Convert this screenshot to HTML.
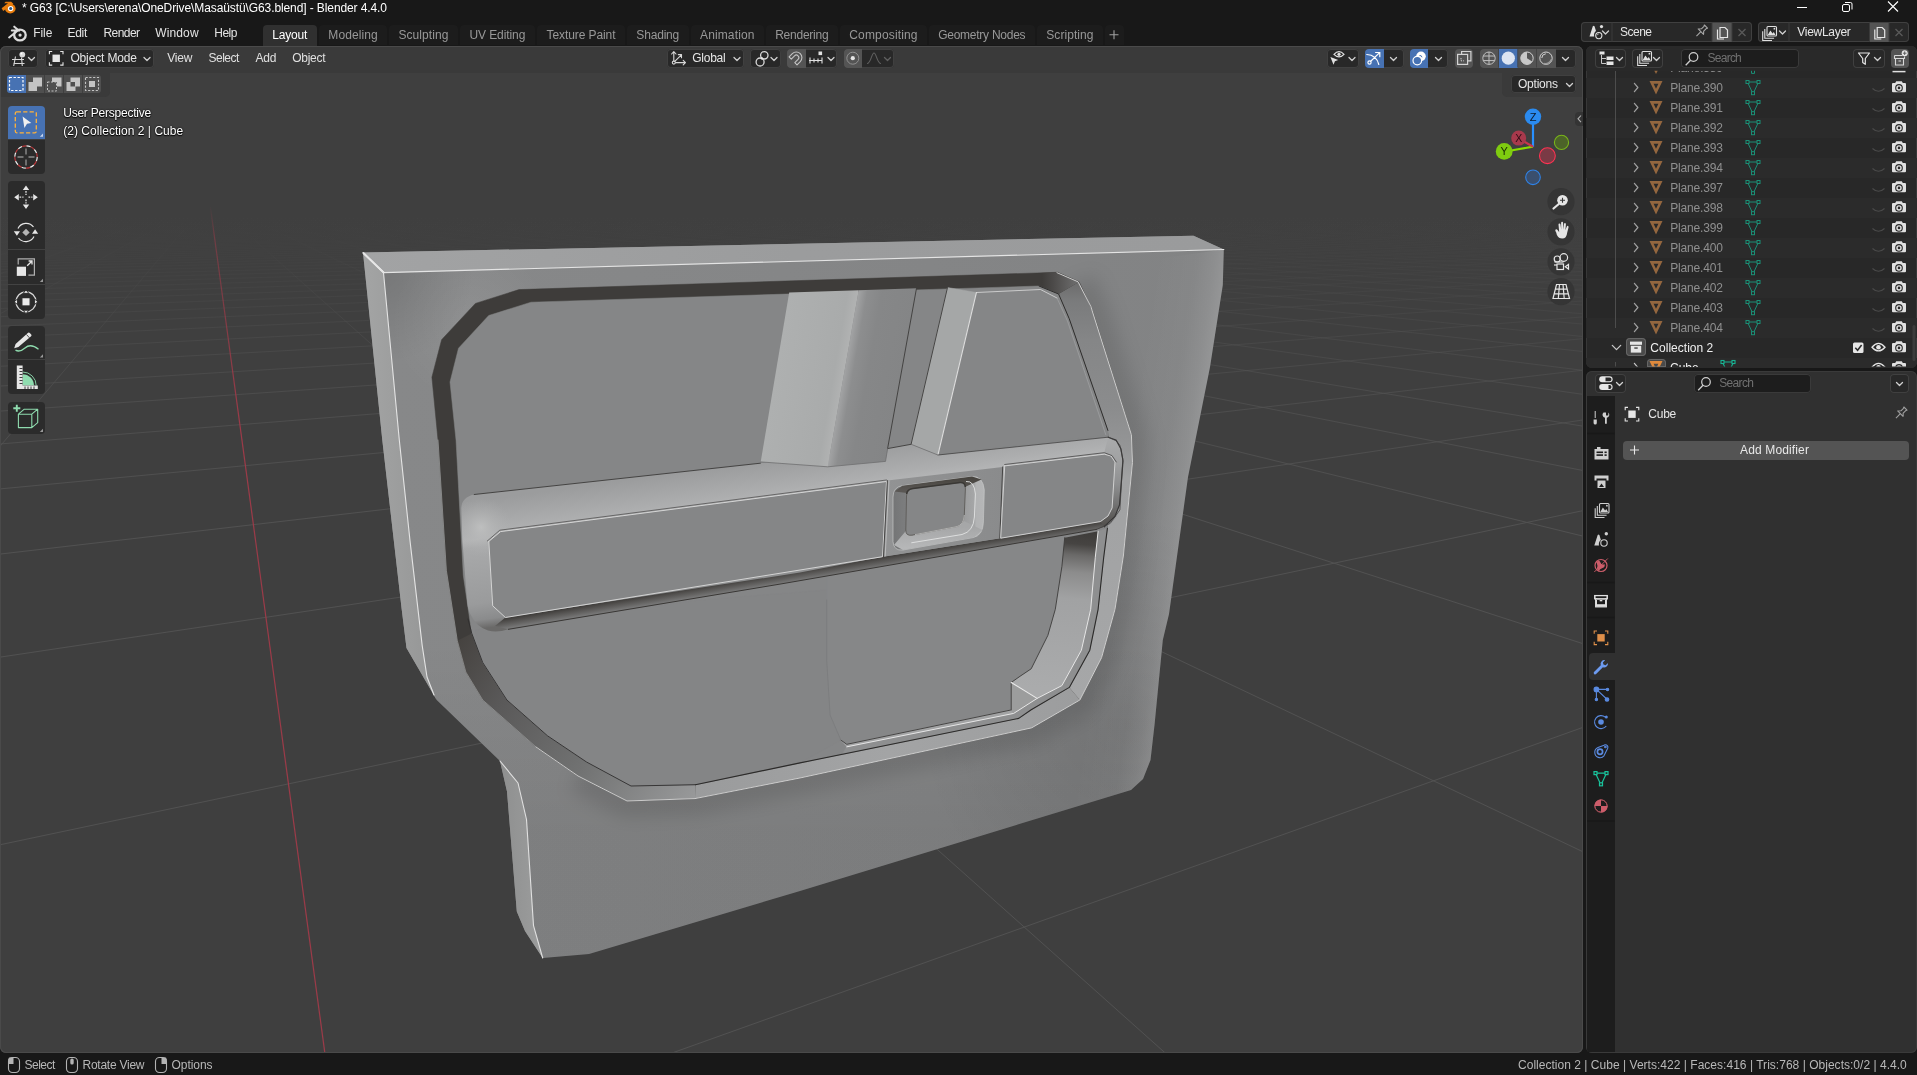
<!DOCTYPE html>
<html lang="en"><head><meta charset="utf-8"><title>Blender</title><style>
html,body{margin:0;padding:0}
body{width:1917px;height:1075px;background:#181818;position:relative;overflow:hidden;font-family:"Liberation Sans",sans-serif;font-size:12px;color:#e6e6e6}
#app{position:absolute;left:0;top:0;width:1917px;height:1075px;will-change:transform}
.b{position:absolute;box-sizing:border-box}
.t{position:absolute;white-space:pre;line-height:20px;height:20px}
svg{position:absolute;left:0;top:0;overflow:hidden}
</style></head>
<body>
<div id="app">
<span class="t" style="left:22.0px;top:-2.0px;font-size:12px;letter-spacing:-0.100px;color:#ffffff;">* G63 [C:\Users\erena\OneDrive\Masaüstü\G63.blend] - Blender 4.4.0</span>
<span class="t" style="left:33.3px;top:22.5px;font-size:12px;letter-spacing:-0.111px;color:#e4e4e4;">File</span>
<span class="t" style="left:67.4px;top:22.5px;font-size:12px;letter-spacing:-0.226px;color:#e4e4e4;">Edit</span>
<span class="t" style="left:103.4px;top:22.5px;font-size:12px;letter-spacing:-0.531px;color:#e4e4e4;">Render</span>
<span class="t" style="left:155.2px;top:22.5px;font-size:12px;letter-spacing:0.144px;color:#e4e4e4;">Window</span>
<span class="t" style="left:214.3px;top:22.5px;font-size:12px;letter-spacing:-0.559px;color:#e4e4e4;">Help</span>
<div class="b" style="left:263.0px;top:25.0px;width:54.0px;height:21.0px;background:#303030;border-radius:4px 4px 0 0;"></div>
<span class="t" style="left:272.3px;top:25.2px;font-size:12px;letter-spacing:-0.206px;color:#ffffff;">Layout</span>
<div class="b" style="left:318.8px;top:25.0px;width:68.3px;height:20.0px;background:#1c1c1c;border-radius:4px 4px 0 0;"></div>
<span class="t" style="left:328.3px;top:25.2px;font-size:12px;letter-spacing:0.086px;color:#989898;">Modeling</span>
<div class="b" style="left:388.9px;top:25.0px;width:69.1px;height:20.0px;background:#1c1c1c;border-radius:4px 4px 0 0;"></div>
<span class="t" style="left:398.4px;top:25.2px;font-size:12px;letter-spacing:0.092px;color:#989898;">Sculpting</span>
<div class="b" style="left:460.0px;top:25.0px;width:74.8px;height:20.0px;background:#1c1c1c;border-radius:4px 4px 0 0;"></div>
<span class="t" style="left:469.5px;top:25.2px;font-size:12px;letter-spacing:-0.099px;color:#989898;">UV Editing</span>
<div class="b" style="left:537.1px;top:25.0px;width:87.9px;height:20.0px;background:#1c1c1c;border-radius:4px 4px 0 0;"></div>
<span class="t" style="left:546.6px;top:25.2px;font-size:12px;letter-spacing:-0.095px;color:#989898;">Texture Paint</span>
<div class="b" style="left:626.8px;top:25.0px;width:62.0px;height:20.0px;background:#1c1c1c;border-radius:4px 4px 0 0;"></div>
<span class="t" style="left:636.3px;top:25.2px;font-size:12px;letter-spacing:-0.173px;color:#989898;">Shading</span>
<div class="b" style="left:690.5px;top:25.0px;width:73.4px;height:20.0px;background:#1c1c1c;border-radius:4px 4px 0 0;"></div>
<span class="t" style="left:700.0px;top:25.2px;font-size:12px;letter-spacing:0.130px;color:#989898;">Animation</span>
<div class="b" style="left:765.7px;top:25.0px;width:72.4px;height:20.0px;background:#1c1c1c;border-radius:4px 4px 0 0;"></div>
<span class="t" style="left:775.2px;top:25.2px;font-size:12px;letter-spacing:-0.246px;color:#989898;">Rendering</span>
<div class="b" style="left:839.8px;top:25.0px;width:87.2px;height:20.0px;background:#1c1c1c;border-radius:4px 4px 0 0;"></div>
<span class="t" style="left:849.3px;top:25.2px;font-size:12px;letter-spacing:0.150px;color:#989898;">Compositing</span>
<div class="b" style="left:928.7px;top:25.0px;width:106.4px;height:20.0px;background:#1c1c1c;border-radius:4px 4px 0 0;"></div>
<span class="t" style="left:938.2px;top:25.2px;font-size:12px;letter-spacing:-0.254px;color:#989898;">Geometry Nodes</span>
<div class="b" style="left:1036.8px;top:25.0px;width:66.1px;height:20.0px;background:#1c1c1c;border-radius:4px 4px 0 0;"></div>
<span class="t" style="left:1046.3px;top:25.2px;font-size:12px;letter-spacing:0.052px;color:#989898;">Scripting</span>
<div class="b" style="left:1104.5px;top:25.0px;width:19.5px;height:20.0px;background:#1c1c1c;border-radius:4px 4px 0 0;"></div>
<div class="b" style="left:1581.0px;top:22.0px;width:171.0px;height:20.0px;background:#282828;border-radius:4px;box-shadow:inset 0 0 0 1px #404040;"></div>
<div class="b" style="left:1712.0px;top:22.5px;width:20.0px;height:19.0px;background:#545454;"></div>
<span class="t" style="left:1620.0px;top:22.3px;font-size:12px;letter-spacing:-0.506px;color:#e6e6e6;">Scene</span>
<div class="b" style="left:1758.0px;top:22.0px;width:151.0px;height:20.0px;background:#282828;border-radius:4px;box-shadow:inset 0 0 0 1px #404040;"></div>
<div class="b" style="left:1869.5px;top:22.5px;width:19.5px;height:19.0px;background:#545454;"></div>
<span class="t" style="left:1797.3px;top:22.3px;font-size:12px;letter-spacing:-0.289px;color:#e6e6e6;">ViewLayer</span>
<div class="b" id="vp" style="left:0;top:46px;width:1583px;height:1007px;background:#3f3f3f;border-radius:6px;overflow:hidden;box-shadow:inset 0 0 0 1px #474747"><svg width="1583" height="1007" viewBox="0 46 1583 1007">
<defs>
<linearGradient id="gf" gradientUnits="userSpaceOnUse" x1="0" y1="215" x2="0" y2="520"><stop offset="0" stop-color="#525252" stop-opacity="0"/><stop offset="0.1" stop-color="#525252" stop-opacity="0.06"/><stop offset="0.3" stop-color="#525252" stop-opacity="0.3"/><stop offset="0.6" stop-color="#525252" stop-opacity="0.7"/><stop offset="1" stop-color="#525252" stop-opacity="0.95"/></linearGradient>
<linearGradient id="gr" gradientUnits="userSpaceOnUse" x1="0" y1="205" x2="0" y2="420"><stop offset="0" stop-color="#9c3a48" stop-opacity="0"/><stop offset="0.15" stop-color="#9c3a48" stop-opacity="0.5"/><stop offset="1" stop-color="#9c3a48" stop-opacity="1"/></linearGradient>
<linearGradient id="m1" gradientUnits="userSpaceOnUse" x1="383.0" y1="0.0" x2="1224.0" y2="0.0"><stop offset="0" stop-color="#878889"/><stop offset="0.3" stop-color="#868788"/><stop offset="0.65" stop-color="#848586"/><stop offset="1" stop-color="#828384"/></linearGradient>
<linearGradient id="skd" gradientUnits="userSpaceOnUse" x1="0" y1="640" x2="0" y2="830"><stop offset="0" stop-color="#000" stop-opacity="0"/><stop offset="1" stop-color="#000" stop-opacity="0.065"/></linearGradient>
<radialGradient id="skr" gradientUnits="userSpaceOnUse" cx="1128" cy="725" r="210"><stop offset="0" stop-color="#000" stop-opacity="0.1"/><stop offset="0.5" stop-color="#000" stop-opacity="0.05"/><stop offset="1" stop-color="#000" stop-opacity="0"/></radialGradient>
<radialGradient id="tld" gradientUnits="userSpaceOnUse" cx="384" cy="273" r="90"><stop offset="0" stop-color="#000" stop-opacity="0.12"/><stop offset="1" stop-color="#000" stop-opacity="0"/></radialGradient>
<radialGradient id="tll" gradientUnits="userSpaceOnUse" cx="470" cy="322" r="80"><stop offset="0" stop-color="#fff" stop-opacity="0.07"/><stop offset="1" stop-color="#fff" stop-opacity="0"/></radialGradient>
<linearGradient id="m2" gradientUnits="userSpaceOnUse" x1="363.0" y1="0.0" x2="1224.0" y2="0.0"><stop offset="0" stop-color="#a2a3a4"/><stop offset="0.5" stop-color="#9b9c9d"/><stop offset="1" stop-color="#9a9b9c"/></linearGradient>
<linearGradient id="m3" gradientUnits="userSpaceOnUse" x1="360.0" y1="0.0" x2="430.0" y2="0.0"><stop offset="0" stop-color="#a4a5a5"/><stop offset="1" stop-color="#969797"/></linearGradient>
<linearGradient id="m4" gradientUnits="userSpaceOnUse" x1="500.0" y1="0.0" x2="545.0" y2="0.0"><stop offset="0" stop-color="#8e8f8f"/><stop offset="1" stop-color="#9d9e9e"/></linearGradient>
<linearGradient id="rlite" gradientUnits="userSpaceOnUse" x1="1118" y1="420" x2="1200" y2="432.6"><stop offset="0.15" stop-color="#fff" stop-opacity="0"/><stop offset="0.65" stop-color="#fff" stop-opacity="0.03"/><stop offset="0.86" stop-color="#fff" stop-opacity="0.09"/><stop offset="1" stop-color="#fff" stop-opacity="0.15"/></linearGradient>
<clipPath id="rpclip"><polygon points="363.0,252.6 1193.5,235.7 1223.8,249.5 1222.8,285.0 1210.0,367.0 1188.0,477.0 1169.0,614.0 1162.8,640.0 1154.6,724.0 1150.5,760.0 1143.0,779.0 1131.0,790.0 800.0,891.0 589.0,954.0 542.7,958.0 525.0,931.0 516.8,911.6 507.0,791.6 500.0,761.0 436.7,700.0 406.5,648.0 401.7,609.3 382.3,440.0"/></clipPath><filter id="blur9" filterUnits="userSpaceOnUse" x="300" y="200" width="1000" height="800"><feGaussianBlur stdDeviation="9"/></filter>
<linearGradient id="m5" gradientUnits="userSpaceOnUse" x1="455.0" y1="640.0" x2="700.0" y2="800.0"><stop offset="0" stop-color="#45423f"/><stop offset="0.25" stop-color="#5a5959"/><stop offset="0.6" stop-color="#717272"/><stop offset="1" stop-color="#9a9b9c"/></linearGradient>
<linearGradient id="m6" gradientUnits="userSpaceOnUse" x1="695.0" y1="0.0" x2="1080.0" y2="0.0"><stop offset="0" stop-color="#9a9b9c"/><stop offset="0.5" stop-color="#a3a4a5"/><stop offset="1" stop-color="#9c9d9e"/></linearGradient>
<linearGradient id="m7" gradientUnits="userSpaceOnUse" x1="0.0" y1="282.0" x2="0.0" y2="700.0"><stop offset="0" stop-color="#6c6c6c"/><stop offset="0.045" stop-color="#7a7b7c"/><stop offset="0.14" stop-color="#858687"/><stop offset="0.3" stop-color="#8b8c8d"/><stop offset="0.4" stop-color="#959697"/><stop offset="0.47" stop-color="#a1a2a3"/><stop offset="1" stop-color="#a6a7a8"/></linearGradient>
<linearGradient id="m8" gradientUnits="userSpaceOnUse" x1="1042.0" y1="0.0" x2="1076.0" y2="0.0"><stop offset="0" stop-color="#3e3c3a"/><stop offset="0.35" stop-color="#4d4b4a"/><stop offset="1" stop-color="#6c6c6c"/></linearGradient>
<linearGradient id="m9" gradientUnits="userSpaceOnUse" x1="1078.0" y1="533.0" x2="1064.0" y2="690.0"><stop offset="0" stop-color="#3f3d3b"/><stop offset="0.07" stop-color="#464442"/><stop offset="0.14" stop-color="#6a6968"/><stop offset="0.25" stop-color="#8c8c8c"/><stop offset="0.42" stop-color="#a1a2a3"/><stop offset="1" stop-color="#aaabac"/></linearGradient>
<linearGradient id="m10" gradientUnits="userSpaceOnUse" x1="700.0" y1="469.8" x2="717.6" y2="595.8"><stop offset="0" stop-color="#9b9c9d"/><stop offset="0.12" stop-color="#a4a5a6"/><stop offset="0.24" stop-color="#adaeaf"/><stop offset="0.3" stop-color="#b3b4b5"/><stop offset="0.36" stop-color="#a8a9aa"/><stop offset="0.8" stop-color="#9a9b9c"/><stop offset="0.93" stop-color="#8a8b8c"/><stop offset="1" stop-color="#6a6968"/></linearGradient>
<radialGradient id="armhl" gradientUnits="userSpaceOnUse" cx="481" cy="527" r="30"><stop offset="0" stop-color="#c4c5c5" stop-opacity="0.75"/><stop offset="0.45" stop-color="#b8b9b9" stop-opacity="0.45"/><stop offset="1" stop-color="#b0b1b2" stop-opacity="0"/></radialGradient>
<clipPath id="armclip"><path d="M474.2 494.5 L560 485 L560 622 L508.4 629.3 Q497 633 488 630.5 Q477 627 472 617 Q468 611 467.3 603 L462.3 539.4 L461.3 508 Q461.5 497.5 474.2 494.5Z"/></clipPath>
<linearGradient id="m11" gradientUnits="userSpaceOnUse" x1="461.0" y1="0.0" x2="500.0" y2="0.0"><stop offset="0" stop-color="#a9aaab"/><stop offset="0.5" stop-color="#b1b2b3"/><stop offset="1" stop-color="#b1b2b3"/></linearGradient>
<linearGradient id="m12" gradientUnits="userSpaceOnUse" x1="775.0" y1="380.0" x2="845.0" y2="392.0"><stop offset="0" stop-color="#aeb0b0"/><stop offset="0.8" stop-color="#a9abab"/><stop offset="1" stop-color="#b4b5b5"/></linearGradient>
<linearGradient id="m13" gradientUnits="userSpaceOnUse" x1="843.0" y1="380.0" x2="900.0" y2="390.0"><stop offset="0" stop-color="#a2a3a4"/><stop offset="0.15" stop-color="#8d8e8f"/><stop offset="0.4" stop-color="#868788"/><stop offset="1" stop-color="#848586"/></linearGradient>
<linearGradient id="m14" gradientUnits="userSpaceOnUse" x1="0.0" y1="440.0" x2="0.0" y2="528.0"><stop offset="0" stop-color="#a9aaab"/><stop offset="0.25" stop-color="#a0a1a2"/><stop offset="0.5" stop-color="#8e8f90"/><stop offset="0.72" stop-color="#747474"/><stop offset="0.9" stop-color="#5a5856"/><stop offset="1" stop-color="#504e4b"/></linearGradient>
<linearGradient id="m15" gradientUnits="userSpaceOnUse" x1="700.0" y1="586.0" x2="701.7" y2="596.4"><stop offset="0" stop-color="#3b3937"/><stop offset="0.3" stop-color="#4e4c4a"/><stop offset="0.7" stop-color="#656463"/><stop offset="1" stop-color="#777777"/></linearGradient>
<linearGradient id="m16" gradientUnits="userSpaceOnUse" x1="885.0" y1="0.0" x2="1003.0" y2="0.0"><stop offset="0" stop-color="#929394"/><stop offset="0.5" stop-color="#8e8f90"/><stop offset="1" stop-color="#8a8b8c"/></linearGradient>
<linearGradient id="m17" gradientUnits="userSpaceOnUse" x1="893.0" y1="0.0" x2="985.0" y2="0.0"><stop offset="0" stop-color="#747576"/><stop offset="0.13" stop-color="#7c7d7e"/><stop offset="0.16" stop-color="#858687"/><stop offset="0.78" stop-color="#9c9d9e"/><stop offset="0.89" stop-color="#a6a7a8"/><stop offset="0.9" stop-color="#b2b3b4"/><stop offset="1" stop-color="#b6b7b8"/></linearGradient>
<linearGradient id="m18" gradientUnits="userSpaceOnUse" x1="0.0" y1="478.0" x2="0.0" y2="490.0"><stop offset="0" stop-color="#47443f"/><stop offset="1" stop-color="#5a5754"/></linearGradient>
<linearGradient id="m19" gradientUnits="userSpaceOnUse" x1="0.0" y1="527.0" x2="0.0" y2="548.0"><stop offset="0" stop-color="#a6a7a8"/><stop offset="1" stop-color="#b6b7b8"/></linearGradient>
</defs>
<path d="M-2983.4 286.8L-90.2 207.7M-2991.6 289.4L-81.5 207.7M-2980.6 291.5L-72.8 207.6M-2989.2 294.4L-64.2 207.6M-2998.4 297.4L-55.6 207.6M-2986.5 299.9L-47.1 207.6M-2996.2 303.4L-38.6 207.5M-2983.4 306.2L-30.1 207.5M-2993.6 310.1L-21.8 207.5M-2980.0 313.4L-13.4 207.5M-2990.7 317.8L-5.1 207.4M-2976.0 321.6L3.1 207.4M-2987.4 326.7L11.4 207.4M-2999.8 332.3L19.5 207.4M-2983.5 337.1L27.6 207.3M-2996.9 343.6L35.7 207.3M-2979.0 349.3L43.8 207.3M-2993.3 357.1L51.8 207.3M-2973.5 364.0L59.7 207.2M-2989.0 373.4L67.6 207.2M-2966.8 381.8L75.5 207.2M-2983.7 393.5L83.3 207.2M-2958.5 404.0L91.1 207.1M-2977.0 419.0L98.8 207.1M-2998.5 436.3L106.5 207.1M-2968.2 452.2L114.2 207.1M-2992.5 475.4L121.8 207.0M-2956.4 497.3L129.4 207.0M-2984.1 530.2L137.0 207.0M-2939.3 562.1L144.5 207.0M-2971.6 612.2L152.0 207.0M-2912.6 663.4L159.4 206.9M-2950.7 748.8L166.8 206.9M-2865.1 843.6L174.1 206.9M-2909.0 1021.5L181.5 206.9M-2986.5 1335.6L188.7 206.8M-2784.7 1834.5L196.0 206.8M-1855.1 2632.7L203.2 206.8M2884.5 2588.0L217.5 206.8M4499.6 2236.9L224.6 206.7M4628.9 1628.7L231.7 206.7M4698.9 1299.8L238.7 206.7M4742.7 1093.9L245.7 206.7M4772.7 952.7L252.7 206.6M4794.6 850.0L259.6 206.6M4999.0 795.2L266.5 206.6M4991.7 728.9L273.4 206.6M4985.9 675.9L280.2 206.6M4981.1 632.4L287.0 206.5M4977.2 596.2L293.7 206.5M4973.8 565.6L300.5 206.5M4970.9 539.3L307.2 206.5M4968.4 516.6L313.8 206.5M4966.2 496.6L320.4 206.4M4964.3 479.0L327.0 206.4M4962.6 463.4L333.6 206.4M4961.1 449.4L340.1 206.4M4959.7 436.8L346.6 206.4M4958.4 425.4L353.1 206.3M4957.3 415.0L359.6 206.3M4956.3 405.6L366.0 206.3M4955.3 396.9L372.4 206.3M4954.4 388.9L378.7 206.3M4953.6 381.5L385.0 206.2M4952.9 374.7L391.3 206.2M4952.2 368.4L397.6 206.2M4951.5 362.5L403.8 206.2M4950.9 357.0L410.0 206.2M4950.4 351.8L416.2 206.1M4998.8 348.5L422.3 206.1M4996.8 343.9L428.5 206.1M4994.9 339.5L434.5 206.1M4993.2 335.4L440.6 206.1M4991.5 331.5L446.6 206.1M4989.9 327.9L452.6 206.0M4988.4 324.4L458.6 206.0M4987.0 321.1L464.6 206.0M4985.6 318.0L470.5 206.0M4984.4 315.0L476.4 206.0M4983.1 312.2L482.3 205.9M4982.0 309.5L488.1 205.9M4980.9 306.9L493.9 205.9M4979.8 304.5L499.7 205.9M4978.8 302.1L505.5 205.9M4977.8 299.9L511.2 205.9M4976.9 297.7L516.9 205.8M4976.0 295.7L522.6 205.8M4975.1 293.7L528.3 205.8M4974.3 291.8L533.9 205.8M4973.5 289.9L539.5 205.8M4972.8 288.2L545.1 205.8M4972.0 286.5L550.7 205.7M4971.3 284.8L556.2 205.7M4998.8 283.8L561.7 205.7M4997.6 282.2L567.2 205.7M4996.5 280.7L572.7 205.7M4995.4 279.3L578.1 205.7M4994.4 277.9L583.6 205.6M4993.4 276.6L589.0 205.6M4992.4 275.3L594.3 205.6M4991.5 274.0L599.7 205.6M4990.5 272.8L605.0 205.6M4989.7 271.6L610.3 205.6M4988.8 270.5L615.6 205.5M4988.0 269.4L620.8 205.5M4987.2 268.3L626.1 205.5M4986.4 267.3L631.3 205.5M4985.6 266.3L636.5 205.5M4984.9 265.3L641.6 205.5M4984.1 264.3L646.8 205.4M4983.4 263.4L651.9 205.4M4982.8 262.5L657.0 205.4M4982.1 261.6L662.1 205.4M4981.5 260.8L667.1 205.4M4980.8 259.9L672.2 205.4M4980.2 259.1L677.2 205.3M4999.6 258.6L682.2 205.3M4998.8 257.8L687.2 205.3M4998.0 257.0L692.1 205.3M4997.2 256.3L697.1 205.3M4996.4 255.6L702.0 205.3M4995.6 254.9L706.9 205.3M4994.9 254.2L711.7 205.2M4994.2 253.5L716.6 205.2M4993.5 252.9L721.4 205.2M4992.8 252.2L726.2 205.2M4992.1 251.6L731.0 205.2M4991.5 251.0L735.8 205.2M4990.8 250.4L740.5 205.2M4990.2 249.8L745.3 205.1M4989.6 249.2L750.0 205.1M4989.0 248.7L754.7 205.1M4988.4 248.1L759.4 205.1M4987.8 247.6L764.0 205.1M4987.2 247.1L768.7 205.1M4986.7 246.5L773.3 205.1M4986.1 246.0L777.9 205.0M4985.6 245.5L782.5 205.0M4985.1 245.1L787.0 205.0M4984.6 244.6L791.6 205.0M4999.4 244.3L796.1 205.0M4998.8 243.8L800.6 205.0M4998.2 243.4L805.1 205.0M4997.5 242.9L809.6 204.9M4996.9 242.5L814.0 204.9M4996.3 242.1L818.5 204.9M4995.8 241.6L822.9 204.9M4995.2 241.2L827.3 204.9M4994.6 240.8L831.7 204.9M4994.1 240.4L836.1 204.9M4993.5 240.0L840.4 204.8M4993.0 239.7L844.8 204.8M4992.5 239.3L849.1 204.8M4992.0 238.9L853.4 204.8M4991.4 238.6L857.7 204.8M4990.9 238.2L861.9 204.8M4990.5 237.9L866.2 204.8M4990.0 237.5L870.4 204.8M4989.5 237.2L874.6 204.7M4999.4 415.0L3197.2 213.0M4981.5 473.6L3166.9 212.9M4975.4 580.3L3137.2 212.7M4961.6 821.2L3108.1 212.6M4900.9 1877.3L3079.5 212.5M822.6 2823.6L3051.5 212.3M-2806.8 2296.6L3024.1 212.2M-2765.2 1428.5L2997.2 212.1M-2927.3 1095.8L2970.8 212.0M-2876.1 888.3L2944.9 211.9M-2960.0 769.9L2919.5 211.8M-2919.2 678.3L2894.5 211.6M-2975.3 618.0L2870.0 211.5M-2942.1 566.6L2845.9 211.4M-2984.1 530.2L2822.3 211.3M-2956.4 497.3L2799.1 211.2M-2989.9 472.9L2776.3 211.1M-2966.0 450.0L2753.9 211.0M-2993.9 432.6L2731.9 210.9M-2973.1 415.8L2710.3 210.8M-2996.9 402.7L2689.0 210.7M-2978.4 389.9L2668.1 210.6M-2999.2 379.7L2647.5 210.5M-2982.6 369.5L2627.3 210.4M-2967.7 360.4L2607.4 210.3M-2985.9 353.1L2587.8 210.3M-2972.3 345.7L2568.6 210.2M-2988.7 339.6L2549.7 210.1M-2976.1 333.4L2531.0 210.0M-2991.0 328.3L2512.7 209.9M-2979.3 323.1L2494.6 209.8M-2993.0 318.8L2476.9 209.7M-2982.1 314.3L2459.4 209.7M-2994.7 310.5L2442.1 209.6M-2984.4 306.6L2425.2 209.5M-2996.2 303.4L2408.5 209.4M-2986.5 299.9L2392.0 209.4M-2997.4 297.1L2375.8 209.3M-2988.3 294.1L2359.8 209.2M-2998.6 291.5L2344.1 209.1M-2989.9 288.8L2328.5 209.1M-2999.6 286.6L2313.2 209.0M-2991.4 284.2L2298.2 208.9M-2983.6 281.9L2283.3 208.9M-2992.7 280.0L2268.7 208.8M-2985.3 277.9L2254.2 208.7M-2993.9 276.2L2240.0 208.7M-2986.8 274.3L2225.9 208.6M-2994.9 272.8L2212.1 208.6M-2988.1 271.1L2198.4 208.5M-2995.9 269.6L2185.0 208.4M-2989.4 268.1L2171.7 208.4M-2996.8 266.7L2158.5 208.3M-2990.5 265.3L2145.6 208.3M-2997.6 264.1L2132.8 208.2M-2991.6 262.8L2120.2 208.1M-2998.4 261.6L2107.8 208.1M-2992.5 260.4L2095.5 208.0M-2999.1 259.4L2083.4 208.0M-2993.4 258.3L2071.4 207.9M-2976.3 257.1L2059.6 207.9M-2859.2 255.0L2047.9 207.8M-2750.4 253.0L2036.4 207.8M-2649.0 251.2L2025.0 207.7M-2554.4 249.4L2013.8 207.7M-2465.8 247.8L2002.7 207.6M-2382.7 246.3L1991.7 207.6M-2304.6 244.9L1980.9 207.5M-2231.1 243.6L1970.2 207.5M-2161.8 242.3L1959.6 207.4M-2096.3 241.2L1949.2 207.4M-2034.3 240.0L1938.9 207.3M-1975.5 239.0L1928.7 207.3M-1919.8 238.0L1918.6 207.2M-1866.8 237.0L1908.6 207.2M-1816.4 236.1L1898.8 207.1M-1768.4 235.2L1889.0 207.1M-1722.6 234.4L1879.4 207.0M-1678.9 233.6L1869.9 207.0M-1637.2 232.9L1860.5 207.0M-1597.2 232.1L1851.2 206.9M-1558.9 231.5L1842.0 206.9M-1522.2 230.8L1832.9 206.8M-1487.0 230.2L1823.9 206.8M-1453.2 229.5L1815.0 206.8M-1420.8 229.0L1806.3 206.7M-1389.5 228.4L1797.6 206.7M-1359.5 227.9L1789.0 206.6M-1330.5 227.3L1780.4 206.6M-1302.6 226.8L1772.0 206.6M-1275.7 226.3L1763.7 206.5M-1249.8 225.9L1755.4 206.5M-1224.7 225.4L1747.3 206.5M-1200.5 225.0L1739.2 206.4M-1177.0 224.6L1731.2 206.4M-1154.4 224.1L1723.3 206.3M-1132.5 223.7L1715.5 206.3M-1111.2 223.4L1707.8 206.3M-1090.7 223.0L1700.1 206.2M-1070.7 222.6L1692.5 206.2M-1051.4 222.3L1685.0 206.2M-1032.6 221.9L1677.6 206.1M-1014.4 221.6L1670.2 206.1M-996.7 221.3L1663.0 206.1M-979.5 221.0L1655.7 206.0M-962.8 220.7L1648.6 206.0M-946.6 220.4L1641.5 206.0M-930.8 220.1L1634.5 205.9M-915.4 219.8L1627.6 205.9M-900.5 219.6L1620.7 205.9M-885.9 219.3L1613.9 205.9M-871.7 219.0L1607.2 205.8M-857.9 218.8L1600.5 205.8M-844.4 218.5L1593.9 205.8M-831.3 218.3L1587.4 205.7M-818.5 218.1L1580.9 205.7M-806.0 217.8L1574.5 205.7M-793.8 217.6L1568.1 205.6M-781.9 217.4L1561.8 205.6M-770.2 217.2L1555.6 205.6M-758.9 217.0L1549.4 205.6M-747.8 216.8L1543.3 205.5M-736.9 216.6L1537.2 205.5M-726.3 216.4L1531.2 205.5M-715.9 216.2L1525.2 205.4M-705.8 216.0L1519.3 205.4M-695.8 215.9L1513.4 205.4M-686.1 215.7L1507.6 205.4M-676.6 215.5L1501.9 205.3M-667.3 215.3L1496.2 205.3M-658.2 215.2L1490.5 205.3M-649.3 215.0L1484.9 205.3M-640.5 214.9L1479.3 205.2M-632.0 214.7L1473.8 205.2M-623.6 214.6L1468.4 205.2M-615.3 214.4L1463.0 205.2M-607.3 214.3L1457.6 205.1M-599.4 214.1L1452.3 205.1M-591.6 214.0L1447.0 205.1M-584.0 213.8L1441.8 205.1M-576.5 213.7L1436.6 205.0M-569.2 213.6L1431.4 205.0M-562.0 213.4L1426.3 205.0M-554.9 213.3L1421.3 205.0M-548.0 213.2L1416.3 205.0M-541.2 213.1L1411.3 204.9M-534.5 212.9L1406.4 204.9M-527.9 212.8L1401.5 204.9M-521.5 212.7L1396.6 204.9M-515.1 212.6L1391.8 204.8M-508.9 212.5L1387.0 204.8M-502.7 212.4L1382.3 204.8M-496.7 212.3L1377.6 204.8M-490.8 212.2L1372.9 204.8M-485.0 212.0L1368.3 204.7M-479.2 211.9L1363.7 204.7M-473.6 211.8L1359.2 204.7M-468.1 211.7L1354.6 204.7M-462.6 211.6L1350.2 204.7M-457.2 211.5L1345.7 204.6M-452.0 211.5L1341.3 204.6M-446.8 211.4L1336.9 204.6M-441.6 211.3L1332.6 204.6M-436.6 211.2L1328.3 204.6M-431.6 211.1L1324.0 204.5M-426.8 211.0L1319.7 204.5" stroke="url(#gf)" stroke-width="1" fill="none"/>
<path d="M535.5 2610.2L210.4 206.8" stroke="url(#gr)" stroke-width="1.2" fill="none"/>
<polygon points="363.0,252.6 1193.5,235.7 1223.8,249.5 1222.8,285.0 1210.0,367.0 1188.0,477.0 1169.0,614.0 1162.8,640.0 1154.6,724.0 1150.5,760.0 1143.0,779.0 1131.0,790.0 800.0,891.0 589.0,954.0 542.7,958.0 525.0,931.0 516.8,911.6 507.0,791.6 500.0,761.0 436.7,700.0 406.5,648.0 401.7,609.3 382.3,440.0" fill="url(#m1)"/>
<polygon points="363.0,252.6 1193.5,235.7 1223.8,249.5 1222.8,285.0 1210.0,367.0 1188.0,477.0 1169.0,614.0 1162.8,640.0 1154.6,724.0 1150.5,760.0 1143.0,779.0 1131.0,790.0 800.0,891.0 589.0,954.0 542.7,958.0 525.0,931.0 516.8,911.6 507.0,791.6 500.0,761.0 436.7,700.0 406.5,648.0 401.7,609.3 382.3,440.0" fill="url(#skd)"/>
<polygon points="363.0,252.6 1193.5,235.7 1223.8,249.5 1222.8,285.0 1210.0,367.0 1188.0,477.0 1169.0,614.0 1162.8,640.0 1154.6,724.0 1150.5,760.0 1143.0,779.0 1131.0,790.0 800.0,891.0 589.0,954.0 542.7,958.0 525.0,931.0 516.8,911.6 507.0,791.6 500.0,761.0 436.7,700.0 406.5,648.0 401.7,609.3 382.3,440.0" fill="url(#skr)"/>
<polygon points="363.0,252.6 1193.5,235.7 1223.8,249.5 1222.8,285.0 1210.0,367.0 1188.0,477.0 1169.0,614.0 1162.8,640.0 1154.6,724.0 1150.5,760.0 1143.0,779.0 1131.0,790.0 800.0,891.0 589.0,954.0 542.7,958.0 525.0,931.0 516.8,911.6 507.0,791.6 500.0,761.0 436.7,700.0 406.5,648.0 401.7,609.3 382.3,440.0" fill="url(#tld)"/>
<polygon points="363.0,252.6 1193.5,235.7 1223.8,249.5 1222.8,285.0 1210.0,367.0 1188.0,477.0 1169.0,614.0 1162.8,640.0 1154.6,724.0 1150.5,760.0 1143.0,779.0 1131.0,790.0 800.0,891.0 589.0,954.0 542.7,958.0 525.0,931.0 516.8,911.6 507.0,791.6 500.0,761.0 436.7,700.0 406.5,648.0 401.7,609.3 382.3,440.0" fill="url(#tll)"/>
<polygon points="363.0,252.6 1193.5,235.7 1223.8,249.5 383.5,272.7" fill="url(#m2)"/>
<polygon points="363.0,252.6 383.5,272.7 399.3,440.0 410.1,541.6 422.2,645.6 427.0,677.0 436.7,700.0 406.5,648.0 401.7,609.3 382.3,440.0" fill="url(#m3)"/>
<polygon points="500.0,761.0 518.0,783.0 526.5,819.5 533.5,925.6 542.7,958.0 525.0,931.0 516.8,911.6 507.0,791.6" fill="url(#m4)"/>
<polygon points="1060.0,272.6 1223.8,249.5 1222.8,285.0 1210.0,367.0 1188.0,477.0 1169.0,614.0 1162.8,640.0 1154.6,724.0 1150.5,760.0 1143.0,779.0 1131.0,790.0 1040.0,818.0 1031.6,727.9 1079.9,700.0 1101.6,657.7 1115.0,609.3 1123.4,556.0 1132.5,462.5 1131.4,434.7 1090.8,306.4 1078.0,281.8" fill="url(#rlite)"/>
<g clip-path="url(#rpclip)"><polyline points="1079.2,281.8 1093.2,313.0 1131.4,434.7 1132.5,462.5 1123.4,556.0 1115.0,609.3 1101.6,657.7 1079.9,700.0 1031.6,727.9 800.0,778.0 695.0,798.6 627.0,801.0 578.0,776.0" fill="none" stroke="#000" stroke-opacity="0.115" stroke-width="34" stroke-linejoin="round" filter="url(#blur9)"/></g>
<polygon points="431.9,377.2 441.6,339.7 475.4,303.4 519.0,289.6 1057.5,272.3 1079.2,281.8 1093.2,313.0 1131.4,434.7 1132.5,462.5 1123.4,556.0 1115.0,609.3 1101.6,657.7 1079.9,700.0 1031.6,727.9 800.0,778.0 695.0,798.6 627.0,801.0 578.0,776.0 536.0,747.0 482.7,700.0 465.8,672.0 457.3,640.7 446.4,570.6 438.0,440.0" fill="#3e3c3a" stroke="#3e3c3a" stroke-width="0.5"/>
<polygon points="457.3,640.7 465.8,672.0 482.7,700.0 536.0,747.0 578.0,776.0 627.0,801.0 695.0,798.6 695.4,784.7 631.0,786.0 586.5,762.0 547.5,735.8 506.9,700.0 482.7,662.5 471.8,633.5" fill="url(#m5)"/>
<polygon points="695.0,798.6 800.0,778.0 1031.6,727.9 1079.9,700.0 1069.3,687.4 1031.2,709.8 1018.7,718.4 800.0,762.9 695.4,784.7" fill="url(#m6)"/>
<polygon points="1079.2,281.8 1093.2,313.0 1131.4,434.7 1132.5,462.5 1123.4,556.0 1115.0,609.3 1101.6,657.7 1079.9,700.0 1069.3,687.4 1089.8,650.2 1098.1,609.3 1103.7,557.2 1107.4,528.4 1110.0,462.0 1107.9,430.4 1069.2,318.6 1058.6,294.0" fill="url(#m7)"/>
<polygon points="1040.0,273.0 1057.5,272.3 1079.2,281.8 1058.6,294.0 1039.0,286.0" fill="url(#m8)"/>
<polygon points="450.0,382.0 458.5,348.2 488.7,315.5 531.0,302.2 1039.0,286.0 1058.6,294.0 1069.2,318.6 1107.9,430.4 1110.0,462.0 1107.4,528.4 1103.7,557.2 1098.1,609.3 1089.8,650.2 1069.3,687.4 1031.2,709.8 1018.7,718.4 800.0,762.9 695.4,784.7 631.0,786.0 586.5,762.0 547.5,735.8 506.9,700.0 482.7,662.5 471.8,633.5 463.3,575.4 456.0,440.0" fill="#858687" stroke="#858687" stroke-width="0.5"/>
<polygon points="826.5,590.0 832.0,721.0 840.5,740.5 800.0,762.8 695.4,784.7 631.0,786.0 586.5,762.0 547.5,735.8 506.9,700.0 482.7,662.5 475.0,630.0 700.0,600.0" fill="#848586" stroke="#848586" stroke-width="0.5"/>
<polygon points="826.7,575.0 1064.7,535.0 1064.7,537.7 1061.9,566.5 1055.3,609.3 1047.9,635.3 1031.2,668.8 1020.0,676.3 1011.2,682.5 1011.2,710.0 1010.4,710.1 846.8,744.3 840.9,740.1 830.1,715.1 826.7,660.0" fill="#868788" stroke="#868788" stroke-width="0.5"/>
<polygon points="1098.1,531.2 1095.3,557.2 1090.7,609.3 1081.4,650.2 1061.9,685.6 1037.1,698.4 1013.7,713.4 846.8,746.8 842.0,754.4 1018.7,718.4 1031.2,709.8 1069.3,687.4 1089.8,650.2 1098.1,609.3 1103.7,557.2 1107.4,528.4" fill="#8e8f90" stroke="#8e8f90" stroke-width="0.5"/>
<polygon points="840.9,740.1 846.8,744.3 1010.4,710.1 1011.2,710.0 1013.7,713.4 846.8,746.8" fill="#a2a3a4" stroke="#a2a3a4" stroke-width="0.5"/>
<polygon points="1064.7,537.7 1061.9,566.5 1055.3,609.3 1047.9,635.3 1031.2,668.8 1020.0,676.3 1011.2,682.5 1037.1,698.4 1061.9,685.6 1081.4,650.2 1090.7,609.3 1095.3,557.2 1098.1,531.2" fill="url(#m9)"/>
<polygon points="1011.2,682.5 1037.1,698.4 1013.7,713.4 1011.2,710.0" fill="#9c9d9d" stroke="#9c9d9d" stroke-width="0.5"/>
<polyline points="1064.7,537.7 1061.9,566.5 1055.3,609.3 1047.9,635.3 1031.2,668.8 1020.0,676.3 1011.2,682.5 1011.2,710.0" fill="none" stroke="#3c3b3a" stroke-width="0.9" stroke-opacity="1" stroke-linejoin="round" stroke-linecap="round"/>
<polyline points="1011.2,682.5 1037.1,698.4" fill="none" stroke="#ececec" stroke-width="1.1" stroke-opacity="1" stroke-linejoin="round" stroke-linecap="round"/>
<polyline points="840.9,740.1 846.8,744.3 1010.4,710.1" fill="none" stroke="#3c3b3a" stroke-width="0.9" stroke-opacity="1" stroke-linejoin="round" stroke-linecap="round"/>
<polyline points="826.7,600.0 826.7,660.0 830.1,715.1 840.9,740.1" fill="none" stroke="#7a7b7c" stroke-width="0.8" stroke-opacity="1" stroke-linejoin="round" stroke-linecap="round"/>
<polyline points="1098.1,531.2 1095.3,557.2 1090.7,609.3 1081.4,650.2 1061.9,685.6 1037.1,698.4 1013.7,713.4 846.8,746.8" fill="none" stroke="#e6e6e6" stroke-width="1" stroke-opacity="1" stroke-linejoin="round" stroke-linecap="round"/>
<polyline points="1107.4,528.4 1103.7,557.2 1098.1,609.3 1089.8,650.2 1069.3,687.4 1031.2,709.8 1018.7,718.4 800.0,762.9 695.4,784.7" fill="none" stroke="#2c2b2a" stroke-width="1.1" stroke-opacity="1" stroke-linejoin="round" stroke-linecap="round"/>
<path d="M474.2 494.5 L760.4 463.2 L887.6 448.6 L911.1 444.3 L937.9 455 L1108.2 437.2 Q1116 439 1119.9 445.4 Q1122.6 451 1122.8 459 L1119.9 509.9 Q1117 519 1110.1 523.5 Q1104 528 1096.5 529.4 L780 584.1 L508.4 629.3 Q497 633 488 630.5 Q477 627 472 617 Q468 611 467.3 603 L462.3 539.4 L461.3 508 Q461.5 497.5 474.2 494.5Z" fill="url(#m10)"/>
<g clip-path="url(#armclip)"><rect x="455" y="490" width="110" height="150" fill="url(#m11)" opacity="0"/><circle cx="481" cy="527" r="30" fill="url(#armhl)"/></g>
<polygon points="789.2,292.5 858.7,290.3 827.7,466.8 760.7,461.9" fill="url(#m12)"/>
<polygon points="858.7,290.3 916.5,288.2 885.5,461.4 827.7,466.8" fill="url(#m13)"/>
<polyline points="916.5,288.2 887.6,448.6" fill="none" stroke="#3c3b3a" stroke-width="0.9" stroke-opacity="1" stroke-linejoin="round" stroke-linecap="round"/>
<polygon points="947.5,287.5 976.4,292.5 937.9,455.0 911.1,444.3" fill="#a5a7a7" stroke="#a5a7a7" stroke-width="0.5"/>
<polyline points="947.5,287.5 911.1,444.3" fill="none" stroke="#3c3b3a" stroke-width="0.9" stroke-opacity="1" stroke-linejoin="round" stroke-linecap="round"/>
<polygon points="976.4,292.5 1040.5,289.5 1057.0,298.0 1067.5,321.0 1105.8,434.7 937.9,455.0" fill="#858687" stroke="#858687" stroke-width="0.5"/>
<polyline points="976.4,292.5 937.9,455.0" fill="none" stroke="#dcdcdc" stroke-width="1.1" stroke-opacity="1" stroke-linejoin="round" stroke-linecap="round"/>
<polyline points="976.4,292.5 1040.5,289.5 1057.0,298.0" fill="none" stroke="#dcdcdc" stroke-width="1" stroke-opacity="0.8" stroke-linejoin="round" stroke-linecap="round"/>
<polyline points="1039.0,286.0 1058.6,294.0 1069.2,318.6 1107.9,430.4" fill="none" stroke="#2e2d2c" stroke-width="1" stroke-opacity="1" stroke-linejoin="round" stroke-linecap="round"/>
<polyline points="1057.0,298.0 1067.5,321.0 1105.8,434.7" fill="none" stroke="#a6a7a8" stroke-width="0.8" stroke-opacity="0.8" stroke-linejoin="round" stroke-linecap="round"/>
<polygon points="1104.3,452.2 1112.0,457.3 1115.3,464.0 1112.1,507.9 1108.0,516.0 1100.4,521.6 1096.5,529.4 1104.3,526.8 1115.0,516.4 1119.5,505.0 1123.0,461.0 1121.0,449.0 1116.0,440.0 1108.2,437.2" fill="url(#m14)"/>
<polyline points="1108.2,437.2 1116.0,440.0 1121.0,449.0 1123.0,461.0 1119.5,505.0 1115.0,516.4 1104.3,526.8" fill="none" stroke="#2f2e2d" stroke-width="1.2" stroke-opacity="0.9" stroke-linejoin="round" stroke-linecap="round"/>
<polygon points="505.4,617.5 800.0,572.6 882.6,556.7 1000.7,538.2 1100.4,521.6 1104.3,526.8 1096.5,529.4 780.0,584.1 508.4,629.3 495.0,626.0" fill="url(#m15)"/>
<polygon points="488.8,541.4 500.6,531.6 886.5,481.5 882.6,556.7 505.4,617.5 492.7,605.8" fill="#858687" stroke="#858687" stroke-width="0.5"/>
<polyline points="488.8,541.4 500.6,531.6 886.5,481.5 882.6,556.7 505.4,617.5 492.7,605.8 488.8,541.4" fill="none" stroke="#dcdcdc" stroke-width="1" stroke-opacity="0.9" stroke-linejoin="round" stroke-linecap="round"/>
<polyline points="487.3,541.0 499.8,530.2 886.5,480.0" fill="none" stroke="#3c3b3a" stroke-width="0.8" stroke-opacity="0.8" stroke-linejoin="round" stroke-linecap="round"/>
<polygon points="887.4,480.6 1002.7,466.9 999.8,538.2 883.5,556.7" fill="url(#m16)"/>
<polyline points="887.4,480.6 883.5,556.7" fill="none" stroke="#3c3b3a" stroke-width="0.9" stroke-opacity="1" stroke-linejoin="round" stroke-linecap="round"/>
<polyline points="1002.7,466.9 999.8,538.2" fill="none" stroke="#3c3b3a" stroke-width="0.9" stroke-opacity="1" stroke-linejoin="round" stroke-linecap="round"/>
<polyline points="889.0,481.0 885.2,556.0" fill="none" stroke="#dcdcdc" stroke-width="0.8" stroke-opacity="0.7" stroke-linejoin="round" stroke-linecap="round"/>
<path d="M902.4 485.7 L972 476.6 Q983 476 984.3 490 L983.4 522 Q983 535.5 973 537.6 L903 550 Q893.5 551 893 541.5 L893 497 Q893.2 487 902.4 485.7Z" fill="url(#m17)" stroke="#c4c5c5" stroke-width="0.7"/>
<polygon points="894.5,491.5 902.4,485.7 972.0,476.6 981.5,479.5 966.0,486.5 960.0,482.5 913.0,488.4 907.0,493.0" fill="url(#m18)"/>
<polygon points="894.0,545.0 905.8,531.0 912.0,535.2 957.0,526.5 963.8,521.0 982.6,530.0 973.0,537.6 903.0,550.0" fill="url(#m19)"/>
<path d="M913 488.4 L960 482.5 Q965.6 482 965.4 489 L964.3 515 Q963.8 524.5 957 526.5 L912 535.2 Q905.7 536.2 905.8 530 L906.5 496 Q906.8 489.3 913 488.4Z" fill="#858687" stroke="#55534f" stroke-width="0.8"/>
<path d="M906.6 494 Q907 489.2 913 488.4 L960 482.5 Q965 482 965.4 487" fill="none" stroke="#3a3835" stroke-width="1.5"/>
<path d="M966 481.5 Q974.3 480.5 975.4 494 L974.4 517 Q973.5 531.5 962 534.5 L911.3 542.8" fill="none" stroke="#e2e3e3" stroke-width="0.9"/>
<path d="M964.3 515 Q963.8 524.5 957 526.5 L915 534.6" fill="none" stroke="#d0d1d1" stroke-width="0.7"/>
<polygon points="1004.7,465.9 1104.3,454.2 1111.0,456.0 1115.0,462.0 1112.1,507.9 1108.0,516.0 1100.4,521.6 1000.7,538.2" fill="#858687" stroke="#858687" stroke-width="0.5"/>
<polyline points="1004.7,465.9 1104.3,454.2 1111.0,456.0 1115.0,462.0 1112.1,507.9 1108.0,516.0 1100.4,521.6 1000.7,538.2 1004.7,465.9" fill="none" stroke="#dcdcdc" stroke-width="1" stroke-opacity="0.85" stroke-linejoin="round" stroke-linecap="round"/>
<polyline points="1004.7,464.5 1104.3,452.7 1112.0,455.6 1116.3,462.0" fill="none" stroke="#3c3b3a" stroke-width="0.9" stroke-opacity="0.8" stroke-linejoin="round" stroke-linecap="round"/>
<polyline points="474.2,494.5 760.4,463.2" fill="none" stroke="#3c3b3a" stroke-width="0.9" stroke-opacity="1" stroke-linejoin="round" stroke-linecap="round"/>
<polyline points="887.6,448.6 911.1,444.3" fill="none" stroke="#3c3b3a" stroke-width="0.9" stroke-opacity="1" stroke-linejoin="round" stroke-linecap="round"/>
<polyline points="937.9,455.0 1108.2,437.2 1116.5,441.0 1119.9,445.4 1122.8,459.0 1119.9,509.9 1110.1,523.5 1096.5,529.4" fill="none" stroke="#3c3b3a" stroke-width="0.9" stroke-opacity="0.8" stroke-linejoin="round" stroke-linecap="round"/>
<polyline points="760.7,461.9 827.7,466.8 885.5,461.4 887.6,448.6" fill="none" stroke="#6e6f70" stroke-width="0.8" stroke-opacity="1" stroke-linejoin="round" stroke-linecap="round"/>
<polyline points="911.1,444.3 937.9,455.0" fill="none" stroke="#6e6f70" stroke-width="0.8" stroke-opacity="1" stroke-linejoin="round" stroke-linecap="round"/>
<polyline points="1096.5,529.4 780.0,584.1 508.4,629.3" fill="none" stroke="#3a3836" stroke-width="1" stroke-opacity="1" stroke-linejoin="round" stroke-linecap="round"/>
<polyline points="383.5,272.7 1223.8,249.5" fill="none" stroke="#e4e4e4" stroke-width="1.2" stroke-opacity="1" stroke-linejoin="round" stroke-linecap="round"/>
<polyline points="363.6,253.2 383.5,272.4" fill="none" stroke="#f2f2f2" stroke-width="2" stroke-opacity="1" stroke-linejoin="round" stroke-linecap="round"/>
<polyline points="363.0,252.6 383.5,272.7 399.3,440.0 410.1,541.6 422.2,645.6 427.0,677.0 434.0,695.0" fill="none" stroke="#e4e4e4" stroke-width="1.1" stroke-opacity="1" stroke-linejoin="round" stroke-linecap="round"/>
<polyline points="500.0,761.0 518.0,783.0 526.5,819.5 533.5,925.6 542.7,958.0" fill="none" stroke="#e0e0e0" stroke-width="1.1" stroke-opacity="1" stroke-linejoin="round" stroke-linecap="round"/>
<polyline points="1057.0,272.7 1078.0,281.8 1090.8,306.4 1131.4,434.7 1132.5,462.5 1123.4,556.0 1115.0,609.3 1101.6,657.7 1079.9,700.0 1031.6,727.9 800.0,778.0 695.0,798.6 627.0,801.0 578.0,776.0 536.0,747.0" fill="none" stroke="#d6d6d6" stroke-width="1" stroke-opacity="0.9" stroke-linejoin="round" stroke-linecap="round"/>
<polyline points="536.0,747.0 482.7,700.0 465.8,672.0 457.3,640.7 446.4,570.6 438.0,440.0" fill="none" stroke="#b4b5b5" stroke-width="0.8" stroke-opacity="0.7" stroke-linejoin="round" stroke-linecap="round"/>
<polyline points="468.0,619.0 471.8,633.5 482.7,662.5 506.9,700.0 547.5,735.8 586.5,762.0 631.0,786.0 695.4,784.7" fill="none" stroke="#2f2e2d" stroke-width="1" stroke-opacity="0.9" stroke-linejoin="round" stroke-linecap="round"/>
</svg><div class="b" style="left:0;top:0;width:1583px;height:26.5px;background:#3a3a3a"></div><div class="b" style="left:0;top:26.5px;width:110px;height:24px;background:#3a3a3a;border-radius:0 0 5px 0"></div><div class="b" style="left:1502px;top:26.5px;width:81px;height:24px;background:#3a3a3a;border-radius:0 0 0 5px"></div><div class="b" style="left:0;top:0;width:1583px;height:1007px;border-radius:6px;box-shadow:inset 0 0 0 1px #4a4a4a"></div></div>
<div class="b" style="left:7.5px;top:49.0px;width:30.5px;height:18.5px;background:#282828;border-radius:4px;box-shadow:inset 0 0 0 1px #404040;"></div>
<div class="b" style="left:45.0px;top:49.0px;width:109.0px;height:18.5px;background:#282828;border-radius:4px;box-shadow:inset 0 0 0 1px #404040;"></div>
<span class="t" style="left:70.4px;top:48.2px;font-size:12px;letter-spacing:-0.143px;color:#e6e6e6;">Object Mode</span>
<span class="t" style="left:167.3px;top:48.2px;font-size:12px;letter-spacing:-0.264px;color:#e0e0e0;">View</span>
<span class="t" style="left:208.4px;top:48.2px;font-size:12px;letter-spacing:-0.470px;color:#e0e0e0;">Select</span>
<span class="t" style="left:255.4px;top:48.2px;font-size:12px;letter-spacing:-0.176px;color:#e0e0e0;">Add</span>
<span class="t" style="left:292.3px;top:48.2px;font-size:12px;letter-spacing:-0.296px;color:#e0e0e0;">Object</span>
<div class="b" style="left:7.0px;top:75.0px;width:94.0px;height:18.0px;background:#4f4f4f;border-radius:3px;"></div>
<div class="b" style="left:7.0px;top:75.0px;width:18.5px;height:18.0px;background:#4772b3;border-radius:3px 0 0 3px;"></div>
<div class="b" style="left:667.0px;top:49.0px;width:76.5px;height:18.5px;background:#282828;border-radius:4px;box-shadow:inset 0 0 0 1px #404040;"></div>
<span class="t" style="left:692.3px;top:48.2px;font-size:12px;letter-spacing:-0.277px;color:#e6e6e6;">Global</span>
<div class="b" style="left:749.5px;top:49.0px;width:31.0px;height:18.5px;background:#282828;border-radius:4px;box-shadow:inset 0 0 0 1px #404040;"></div>
<div class="b" style="left:787.0px;top:49.0px;width:50.0px;height:18.5px;background:#282828;border-radius:4px;box-shadow:inset 0 0 0 1px #404040;"></div>
<div class="b" style="left:787.0px;top:49.0px;width:18.5px;height:18.5px;background:#545454;border-radius:4px 0 0 4px;"></div>
<div class="b" style="left:843.5px;top:49.0px;width:50.5px;height:18.5px;background:#282828;border-radius:4px;box-shadow:inset 0 0 0 1px #404040;"></div>
<div class="b" style="left:843.5px;top:49.0px;width:18.5px;height:18.5px;background:#545454;border-radius:4px 0 0 4px;"></div>
<div class="b" style="left:1327.0px;top:49.0px;width:31.5px;height:18.5px;background:#282828;border-radius:4px;box-shadow:inset 0 0 0 1px #404040;"></div>
<div class="b" style="left:1364.5px;top:49.0px;width:39.0px;height:18.5px;background:#282828;border-radius:4px;box-shadow:inset 0 0 0 1px #404040;"></div>
<div class="b" style="left:1364.5px;top:49.0px;width:19.0px;height:18.5px;background:#4772b3;border-radius:4px 0 0 4px;"></div>
<div class="b" style="left:1409.5px;top:49.0px;width:38.5px;height:18.5px;background:#282828;border-radius:4px;box-shadow:inset 0 0 0 1px #404040;"></div>
<div class="b" style="left:1409.5px;top:49.0px;width:18.5px;height:18.5px;background:#4772b3;border-radius:4px 0 0 4px;"></div>
<div class="b" style="left:1455.0px;top:49.0px;width:18.0px;height:18.5px;background:#545454;border-radius:4px;"></div>
<div class="b" style="left:1479.5px;top:49.0px;width:96.0px;height:18.5px;background:#282828;border-radius:4px;box-shadow:inset 0 0 0 1px #404040;"></div>
<div class="b" style="left:1479.5px;top:49.0px;width:76.0px;height:18.5px;background:#545454;border-radius:4px 0 0 4px;"></div>
<div class="b" style="left:1499.0px;top:49.0px;width:18.5px;height:18.5px;background:#4772b3;"></div>
<div class="b" style="left:1510.5px;top:75.0px;width:65.5px;height:18.0px;background:#282828;border-radius:4px;box-shadow:inset 0 0 0 1px #404040;"></div>
<span class="t" style="left:1518.0px;top:74.3px;font-size:12px;letter-spacing:-0.226px;color:#e6e6e6;">Options</span>
<span class="t" style="left:63.2px;top:103.0px;font-size:12px;letter-spacing:-0.224px;color:#ffffff;text-shadow:0 0 2px #000,0 1px 1px #000;">User Perspective</span>
<span class="t" style="left:63.2px;top:121.0px;font-size:12px;letter-spacing:0.038px;color:#ffffff;text-shadow:0 0 2px #000,0 1px 1px #000;">(2) Collection 2 | Cube</span>
<div class="b" style="left:7.5px;top:106.0px;width:37.8px;height:33.0px;background:#4772b3;border-radius:4px 4px 0 0;"></div>
<div class="b" style="left:7.5px;top:139.6px;width:37.8px;height:34.1px;background:#2b2b2b;border-radius:0 0 4px 4px;"></div>
<div class="b" style="left:7.5px;top:181.3px;width:37.8px;height:33.3px;background:#2b2b2b;border-radius:4px 4px 0 0;"></div>
<div class="b" style="left:7.5px;top:215.4px;width:37.8px;height:33.8px;background:#2b2b2b;border-radius:0;"></div>
<div class="b" style="left:7.5px;top:250.0px;width:37.8px;height:34.0px;background:#2b2b2b;border-radius:0;"></div>
<div class="b" style="left:7.5px;top:284.8px;width:37.8px;height:34.4px;background:#2b2b2b;border-radius:0 0 4px 4px;"></div>
<div class="b" style="left:7.5px;top:326.0px;width:37.8px;height:33.4px;background:#2b2b2b;border-radius:4px 4px 0 0;"></div>
<div class="b" style="left:7.5px;top:360.2px;width:37.8px;height:33.8px;background:#2b2b2b;border-radius:0 0 4px 4px;"></div>
<div class="b" style="left:7.5px;top:401.5px;width:37.8px;height:32.5px;background:#2b2b2b;border-radius:4px;"></div>
<div class="b" style="left:1574.5px;top:111.5px;width:8.5px;height:14.5px;background:#343434;border-radius:4px 0 0 4px;"></div>
<div class="b" style="left:1586px;top:46px;width:1331px;height:321.500px;width:331px;background:#282828;border-radius:6px;box-shadow:inset 0 0 0 1px #383838;overflow:hidden">
<div class="b" style="left:0;top:31.5px;width:331px;height:20px;background:#2b2b2b"></div>
<div class="b" style="left:0;top:71.5px;width:331px;height:20px;background:#2b2b2b"></div>
<div class="b" style="left:0;top:111.5px;width:331px;height:20px;background:#2b2b2b"></div>
<div class="b" style="left:0;top:151.5px;width:331px;height:20px;background:#2b2b2b"></div>
<div class="b" style="left:0;top:191.5px;width:331px;height:20px;background:#2b2b2b"></div>
<div class="b" style="left:0;top:231.5px;width:331px;height:20px;background:#2b2b2b"></div>
<div class="b" style="left:0;top:271.5px;width:331px;height:20px;background:#2b2b2b"></div>
<div class="b" style="left:0;top:311.5px;width:331px;height:20px;background:#2b2b2b"></div>
<div class="b" style="left:0;top:0;width:331px;height:24.800px;background:#292929"></div>
</div>
<div class="b" style="left:1594.5px;top:49.0px;width:31.0px;height:18.5px;background:#282828;border-radius:4px;box-shadow:inset 0 0 0 1px #404040;"></div>
<div class="b" style="left:1631.5px;top:49.0px;width:31.2px;height:18.5px;background:#282828;border-radius:4px;box-shadow:inset 0 0 0 1px #404040;"></div>
<div class="b" style="left:1681.0px;top:49.0px;width:118.0px;height:18.5px;background:#1d1d1d;border-radius:4px;box-shadow:inset 0 0 0 1px #3a3a3a;"></div>
<span class="t" style="left:1707.6px;top:48.2px;font-size:12px;letter-spacing:-0.764px;color:#717171;">Search</span>
<div class="b" style="left:1853.0px;top:49.0px;width:31.5px;height:18.5px;background:#282828;border-radius:4px;box-shadow:inset 0 0 0 1px #404040;"></div>
<div class="b" style="left:1890.5px;top:49.0px;width:18.5px;height:18.5px;background:#545454;border-radius:4px;"></div>
<span class="t" style="left:1670.2px;top:78.1px;font-size:12px;letter-spacing:-0.168px;color:#8f8f8f;">Plane.390</span>
<span class="t" style="left:1670.2px;top:98.1px;font-size:12px;letter-spacing:-0.168px;color:#8f8f8f;">Plane.391</span>
<span class="t" style="left:1670.2px;top:118.1px;font-size:12px;letter-spacing:-0.168px;color:#8f8f8f;">Plane.392</span>
<span class="t" style="left:1670.2px;top:138.1px;font-size:12px;letter-spacing:-0.168px;color:#8f8f8f;">Plane.393</span>
<span class="t" style="left:1670.2px;top:158.1px;font-size:12px;letter-spacing:-0.168px;color:#8f8f8f;">Plane.394</span>
<span class="t" style="left:1670.2px;top:178.1px;font-size:12px;letter-spacing:-0.168px;color:#8f8f8f;">Plane.397</span>
<span class="t" style="left:1670.2px;top:198.1px;font-size:12px;letter-spacing:-0.168px;color:#8f8f8f;">Plane.398</span>
<span class="t" style="left:1670.2px;top:218.1px;font-size:12px;letter-spacing:-0.168px;color:#8f8f8f;">Plane.399</span>
<span class="t" style="left:1670.2px;top:238.1px;font-size:12px;letter-spacing:-0.168px;color:#8f8f8f;">Plane.400</span>
<span class="t" style="left:1670.2px;top:258.1px;font-size:12px;letter-spacing:-0.168px;color:#8f8f8f;">Plane.401</span>
<span class="t" style="left:1670.2px;top:278.1px;font-size:12px;letter-spacing:-0.168px;color:#8f8f8f;">Plane.402</span>
<span class="t" style="left:1670.2px;top:298.1px;font-size:12px;letter-spacing:-0.168px;color:#8f8f8f;">Plane.403</span>
<span class="t" style="left:1670.2px;top:318.1px;font-size:12px;letter-spacing:-0.168px;color:#8f8f8f;">Plane.404</span>
<div class="b" style="left:1660px;top:70.800px;width:70px;height:6px;overflow:hidden"><span class="t" style="left:10.200px;top:-12.600px;font-size:12px;color:#8f8f8f;letter-spacing:-0.150px">Plane.389</span></div>
<div class="b" style="left:1626.2px;top:338.2px;width:19.5px;height:17.8px;background:#4a4a4a;border-radius:4px;box-shadow:inset 0 0 0 1px #666666;"></div>
<span class="t" style="left:1650.3px;top:338.2px;font-size:12px;letter-spacing:0.027px;color:#f0f0f0;">Collection 2</span>
<div class="b" style="left:1646.5px;top:358.5px;width:19.0px;height:8.0px;background:#4a4a4a;border-radius:4px 4px 0 0;box-shadow:inset 0 0 0 1px #666666;"></div>
<div class="b" style="left:1660px;top:356px;width:60px;height:10.500px;overflow:hidden"><span class="t" style="left:10px;top:1.800px;font-size:12px;color:#f0f0f0">Cube</span></div>
<div class="b" style="left:1586px;top:371px;width:331px;height:682px;background:#303030;border-radius:6px;box-shadow:inset 0 0 0 1px #3a3a3a;overflow:hidden"><div class="b" style="left:1px;top:25px;width:27.500px;height:656px;background:#1d1d1d"></div></div>
<div class="b" style="left:1588.5px;top:653.0px;width:26.0px;height:26.5px;background:#303030;border-radius:4px 0 0 4px;"></div>
<div class="b" style="left:1594.5px;top:374.0px;width:31.0px;height:18.5px;background:#282828;border-radius:4px;box-shadow:inset 0 0 0 1px #404040;"></div>
<div class="b" style="left:1694.0px;top:374.0px;width:117.0px;height:18.5px;background:#1d1d1d;border-radius:4px;box-shadow:inset 0 0 0 1px #3a3a3a;"></div>
<span class="t" style="left:1719.2px;top:373.2px;font-size:12px;letter-spacing:-0.644px;color:#717171;">Search</span>
<div class="b" style="left:1890.0px;top:374.0px;width:19.0px;height:18.5px;background:#282828;border-radius:4px;box-shadow:inset 0 0 0 1px #404040;"></div>
<span class="t" style="left:1648.3px;top:404.4px;font-size:12px;letter-spacing:-0.229px;color:#e6e6e6;">Cube</span>
<div class="b" style="left:1623.0px;top:440.5px;width:286.0px;height:19.0px;background:#545454;border-radius:4px;"></div>
<span class="t" style="left:1740.0px;top:440.3px;font-size:12px;letter-spacing:0.139px;color:#e8e8e8;">Add Modifier</span>
<span class="t" style="left:24.6px;top:1055.2px;font-size:12px;letter-spacing:-0.530px;color:#b8b8b8;">Select</span>
<span class="t" style="left:82.5px;top:1055.2px;font-size:12px;letter-spacing:-0.248px;color:#b8b8b8;">Rotate View</span>
<span class="t" style="left:171.6px;top:1055.2px;font-size:12px;letter-spacing:-0.059px;color:#b8b8b8;">Options</span>
<span class="t" style="left:1518.0px;top:1055.2px;font-size:12px;letter-spacing:0.025px;color:#b8b8b8;">Collection 2 | Cube | Verts:422 | Faces:416 | Tris:768 | Objects:0/2 | 4.4.0</span>
<svg width="1917" height="1075" viewBox="0 0 1917 1075" style="pointer-events:none">
<g transform="translate(1,0)"><ellipse cx="9.3" cy="8.6" rx="5.3" ry="4.9" fill="#e87d0d"/><path d="M0.6 8.3 L7 3.2 L3.2 3.2 L4.6 1.8 L10.2 1.8 L12.5 4 L9 6 L2.2 11 Z" fill="#e87d0d"/><circle cx="9.6" cy="8.6" r="2.7" fill="#fff"/><circle cx="9.7" cy="8.6" r="1.5" fill="#265787"/></g>
<path d="M1797 7.5h10" stroke="#fff" stroke-width="1"/>
<rect x="1842.5" y="4.5" width="7" height="7" rx="1.5" fill="none" stroke="#fff" stroke-width="1"/><path d="M1845 2.5h5.5a1.5 1.5 0 0 1 1.5 1.5v5.5" fill="none" stroke="#fff" stroke-width="1"/>
<path d="M1888 1.5l10 10M1898 1.5l-10 10" stroke="#fff" stroke-width="1.1"/>
<g transform="translate(7.5,24.5) scale(1.35)" fill="none" stroke="#dcdcdc"><ellipse cx="9.2" cy="7.8" rx="4.3" ry="4" stroke-width="1.7"/><circle cx="9.3" cy="7.8" r="1.2" fill="#dcdcdc" stroke="none"/><path d="M1.2 9.6 L7.6 4.4 M3.2 4.4 H8 M5 1.6 L8.6 4.6" stroke-width="1.5" stroke-linecap="round"/></g>
<path d="M1109.5 34.8h9M1114 30.3v9" stroke="#a0a0a0" stroke-width="1.1"/>
<path d="M1612.0 22.5v19M1712.0 22.5v19M1732.0 22.5v19" stroke="#3a3a3a" stroke-width="1"/>
<polyline points="1602.5,31.0 1605.5,34.0 1608.5,31.0" fill="none" stroke="#d0d0d0" stroke-width="1.3" stroke-linecap="round" stroke-linejoin="round"/>
<g fill="none" stroke="#e6e6e6" stroke-width="1.2"><path d="M1720.0 27.5h5l2.5 2.5v7.5h-7.5z"/><path d="M1717.5 29.5v9.5h6.5"/></g>
<path d="M1738.5 29l7 7M1745.5 29l-7 7" stroke="#5a5a5a" stroke-width="1.3"/>
<path d="M1789.0 22.5v19M1869.5 22.5v19M1889.0 22.5v19" stroke="#3a3a3a" stroke-width="1"/>
<polyline points="1779.5,31.0 1782.5,34.0 1785.5,31.0" fill="none" stroke="#d0d0d0" stroke-width="1.3" stroke-linecap="round" stroke-linejoin="round"/>
<g fill="none" stroke="#e6e6e6" stroke-width="1.2"><path d="M1877.2 27.5h5l2.5 2.5v7.5h-7.5z"/><path d="M1874.8 29.5v9.5h6.5"/></g>
<path d="M1895.5 29l7 7M1902.5 29l-7 7" stroke="#5a5a5a" stroke-width="1.3"/>
<g fill="#e0e0e0"><path d="M1589.5 36.5 L1592.8 26.2 Q1593.6 25.2 1594.5 26.2 L1596 31 Q1593.4 33 1594.2 36.5 Z"/><circle cx="1601.5" cy="26.6" r="1.6"/><circle cx="1598.8" cy="35.6" r="3.1" fill="none" stroke="#e0e0e0" stroke-width="1.1"/><path d="M1597.3 35.2 a1.6 1.6 0 0 1 1.3 -1.3" fill="none" stroke="#e0e0e0" stroke-width="0.8"/></g>
<g transform="translate(1701.0,31.5) rotate(45)" fill="none" stroke="#a8a8a8" stroke-width="1.1" stroke-linejoin="round"><path d="M-2.2 -7h4.4l-0.6 1.2v3.6l2.2 2.4h-7.6l2.2 -2.4v-3.6z"/><path d="M0 0.2v6.2"/></g>
<g fill="none" stroke="#e0e0e0" stroke-width="1.1"><rect x="1767.0" y="26.5" width="9.5" height="9.5" rx="1" /><path d="M1764.8 29.0v9.3h9.3M1762.7 31.2v9.3h9.3"/></g>
<path d="M1767.8 35.0 l2.6 -4.6 l2.2 3 l1.2 -1.4 l1.7 3z" fill="#e0e0e0"/><circle cx="1774.4" cy="28.7" r="0.9" fill="#e0e0e0"/>
<g stroke="#d8d8d8" stroke-width="1.1" fill="none"><path d="M12 59.5h12M13.5 63.5h11M15.5 56.5l-1.8 9.5M21.5 57.5l0.8 8.5"/></g><circle cx="22.3" cy="54.6" r="2.9" fill="#d8d8d8"/><circle cx="21.4" cy="53.7" r="0.9" fill="#fff"/>
<polyline points="28.5,57.5 31.5,60.5 34.5,57.5" fill="none" stroke="#d0d0d0" stroke-width="1.3" stroke-linecap="round" stroke-linejoin="round"/>
<g transform="translate(56.2,58.3) scale(1)"><rect x="-3.7" y="-3.7" width="7.4" height="7.4" fill="#e6e6e6"/><path d="M-6.8 -4v-2.8h2.8M4 -6.8h2.8v2.8M6.8 4v2.8h-2.8M-4 6.8h-2.8v-2.8" fill="none" stroke="#e6e6e6" stroke-width="1.1"/></g>
<polyline points="144.0,57.5 147.0,60.5 150.0,57.5" fill="none" stroke="#d0d0d0" stroke-width="1.3" stroke-linecap="round" stroke-linejoin="round"/>
<path d="M44.5 75v18M63.5 75v18M82.5 75v18" stroke="#3f3f3f" stroke-width="1"/>
<rect x="9.5" y="77.5" width="13.5" height="13" fill="none" stroke="#fff" stroke-width="1.2" stroke-dasharray="2.4 1.6"/>
<path d="M33 77.5h9v9h-5v4.5h-8.5v-9h4.5z" fill="#c4c4c4"/>
<path d="M52 77.5h9.500v9h-4.500v-4.5h-5z" fill="#c4c4c4"/><rect x="47.500" y="82" width="9" height="9" fill="none" stroke="#c4c4c4" stroke-width="1" stroke-dasharray="2 1.5"/>
<path d="M70.5 77.500h9.500v9h-4.500v4.500h-9v-9h4z M70.500 82v4.500h4.500v-4.500z" fill="#c4c4c4" fill-rule="evenodd"/>
<rect x="85.5" y="77.500" width="13" height="13" fill="none" stroke="#c4c4c4" stroke-width="1.1" stroke-dasharray="2.2 1.600"/><rect x="89" y="81" width="6" height="6" fill="#c4c4c4"/>
<g fill="none" stroke="#d8d8d8" stroke-width="1.100" stroke-linejoin="round" stroke-linecap="round"><path d="M673.800 61v-9.200M671.600 54l2.200 -2.400l2.200 2.400M675.300 62.600h10M683.200 60.400l2.300 2.200l-2.300 2.200M674.800 61.400l6.600 -6.600M678.300 54.600h3.200v3.200"/><circle cx="673.800" cy="62.600" r="1.500" fill="#282828"/></g>
<polyline points="734.0,57.5 737.0,60.5 740.0,57.5" fill="none" stroke="#d0d0d0" stroke-width="1.3" stroke-linecap="round" stroke-linejoin="round"/>
<g fill="none" stroke="#d8d8d8" stroke-width="1.300"><circle cx="760.100" cy="62" r="4"/><circle cx="764.300" cy="55.300" r="3.700"/></g><circle cx="761.900" cy="58.400" r="1.200" fill="#e6e6e6"/>
<polyline points="771.0,57.5 774.0,60.5 777.0,57.5" fill="none" stroke="#d0d0d0" stroke-width="1.3" stroke-linecap="round" stroke-linejoin="round"/>
<g transform="translate(796.300,57.600) rotate(45)"><path d="M-5.600 4.600V0A5.600 5.600 0 0 1 5.600 0V4.600H2.500V0A2.500 2.500 0 0 0 -2.500 0V4.600Z" fill="none" stroke="#c4c4c4" stroke-width="1.100" stroke-linejoin="round"/></g>
<g stroke="#e0e0e0" stroke-width="1.100"><path d="M809 60.500h13M810 57.500v6M814 58.500v4M818 58.500v4M822 57.500v6"/></g><rect x="818.500" y="51.500" width="3.600" height="3.600" fill="#e0e0e0"/>
<polyline points="828.0,57.5 831.0,60.5 834.0,57.5" fill="none" stroke="#d0d0d0" stroke-width="1.3" stroke-linecap="round" stroke-linejoin="round"/>
<circle cx="852.800" cy="58.200" r="6" fill="none" stroke="#909090" stroke-width="1"/><circle cx="852.800" cy="58.200" r="2.100" fill="#e6e6e6"/>
<path d="M867 63.500c4 0 4.500 -10.500 7 -10.500s3 10.500 7 10.500" fill="none" stroke="#606060" stroke-width="1.100"/>
<polyline points="884.5,57.5 887.5,60.5 890.5,57.5" fill="none" stroke="#606060" stroke-width="1.3" stroke-linecap="round" stroke-linejoin="round"/>
<path d="M1334 54.300q5 -5.200 10 0q-5 5.200 -10 0z" fill="none" stroke="#e0e0e0" stroke-width="1.200"/><circle cx="1339" cy="54.300" r="1.600" fill="#e0e0e0"/><path d="M1330.400 57l7.800 3l-3.300 1.200l-1.400 3.600z" fill="#e0e0e0"/>
<polyline points="1349.0,57.5 1352.0,60.5 1355.0,57.5" fill="none" stroke="#d0d0d0" stroke-width="1.3" stroke-linecap="round" stroke-linejoin="round"/>
<g fill="none" stroke="#fff" stroke-width="1.200" stroke-linecap="round"><path d="M1370.700 61.200l8.700 -8.300M1375.600 52.500h4.200v4.200M1366.800 54.500q9.600 0.500 12 10"/><circle cx="1369.500" cy="62.500" r="1.600"/></g>
<polyline points="1390.5,57.5 1393.5,60.5 1396.5,57.5" fill="none" stroke="#d0d0d0" stroke-width="1.3" stroke-linecap="round" stroke-linejoin="round"/>
<circle cx="1421" cy="56.300" r="4.800" fill="#fff"/><circle cx="1417.300" cy="60.600" r="4.300" fill="#4772b3" stroke="#fff" stroke-width="1.200"/><path d="M1419.500 55.500a2.200 2.200 0 0 1 2.500 1.800" fill="none" stroke="#4772b3" stroke-width="1"/>
<polyline points="1435.5,57.5 1438.5,60.5 1441.5,57.5" fill="none" stroke="#d0d0d0" stroke-width="1.3" stroke-linecap="round" stroke-linejoin="round"/>
<g fill="none" stroke="#d4d4d4" stroke-width="1.200"><rect x="1457.600" y="54.400" width="10" height="10"/><path d="M1461.600 54.400v-2.900h9.300v9.300h-3.300"/><path d="M1461 58v2.800h2.800" stroke-width="1" stroke-dasharray="1.400 1"/></g>
<path d="M1498.500 49v18.500M1517.700 49v18.500M1536.500 49v18.500" stroke="#3f3f3f" stroke-width="0.8"/>
<g fill="none" stroke="#c0c0c0" stroke-width="1"><circle cx="1489" cy="58.200" r="6.200"/><path d="M1489 52v12.400M1483.200 56h11.600M1483.200 60.600h11.600"/></g>
<circle cx="1508.300" cy="58.200" r="6.600" fill="#dde5f3"/>
<circle cx="1527" cy="58.200" r="6.200" fill="none" stroke="#d4d4d4" stroke-width="1"/><path d="M1527 52v6.200l5.200 3.400a6.200 6.200 0 1 1 -5.200 -9.600z" fill="#c8c8c8"/>
<circle cx="1546" cy="58.200" r="6.200" fill="none" stroke="#d4d4d4" stroke-width="1"/><path d="M1541.800 58a4.300 4.300 0 0 1 4 -4.200" fill="none" stroke="#d4d4d4" stroke-width="1"/><path d="M1544 63.500a6 6 0 0 0 7.300 -4" fill="none" stroke="#9a9a9a" stroke-width="1.600"/>
<polyline points="1562.5,57.5 1565.5,60.5 1568.5,57.5" fill="none" stroke="#d0d0d0" stroke-width="1.3" stroke-linecap="round" stroke-linejoin="round"/>
<polyline points="1566.5,83.5 1569.5,86.5 1572.5,83.5" fill="none" stroke="#d0d0d0" stroke-width="1.3" stroke-linecap="round" stroke-linejoin="round"/>
<path d="M43.0 136.8v-3.200l-3.200 3.200z" fill="#c9d6ec"/>
<path d="M43.0 282.0v-3.200l-3.200 3.200z" fill="#9a9a9a"/>
<path d="M43.0 357.4v-3.200l-3.200 3.200z" fill="#9a9a9a"/>
<path d="M43.0 432.0v-3.200l-3.200 3.200z" fill="#9a9a9a"/>
<rect x="15.300" y="111.800" width="21" height="21" rx="1.500" fill="none" stroke="#ffb23a" stroke-width="1.300" stroke-dasharray="4.200 2.200"/><path d="M22.600 116.500l8.700 6.600l-4.300 0.600l-2.600 4.200z" fill="#f0f0f0"/>
<circle cx="26" cy="157" r="11.200" fill="none" stroke="#ececec" stroke-width="1.200" stroke-dasharray="4.400 4.400"/><circle cx="26" cy="157" r="11.200" fill="none" stroke="#b8393b" stroke-width="1.200" stroke-dasharray="4.400 4.400" stroke-dashoffset="4.400"/><path d="M26 148.500v6M26 159.500v6M17.500 157h6M28.500 157h6" stroke="#8c8c8c" stroke-width="1.400"/>
<g fill="#e6e6e6"><path d="M26 185.500l3.200 4.600h-6.400zM26 209l3.200 -4.600h-6.400zM14.200 197.200l4.600 -3.200v6.400zM37.800 197.200l-4.600 -3.200v6.400z"/></g><path d="M26 191v4M26 199.500v4M19.500 197.200h4M28.500 197.200h4" stroke="#e6e6e6" stroke-width="1.300" stroke-dasharray="1.700 1.100"/>
<g fill="none" stroke="#e6e6e6" stroke-width="1.200"><path d="M18 228.500a9.200 9.200 0 0 1 15.500 -1.500M34 236.500a9.200 9.200 0 0 1 -15.500 1.500"/></g><path d="M26 228.700l3.700 3.700l-3.700 3.700l-3.700 -3.700z" fill="#b4b4b4"/><path d="M13.800 231.200h6.200l-3.100 4.600zM38.200 233.800h-6.200l3.100 -4.600z" fill="#e6e6e6"/>
<rect x="16.800" y="266.700" width="9.200" height="9.200" fill="#e6e6e6"/><path d="M18.200 264.500v-5.600h16.200v16.200h-6" fill="none" stroke="#b0b0b0" stroke-width="1.200"/><path d="M27.200 265.800l4.600 -4.600M28.600 261h3.400v3.400" fill="none" stroke="#e6e6e6" stroke-width="1.300"/>
<circle cx="26" cy="301.800" r="10" fill="none" stroke="#d8d8d8" stroke-width="1.200"/><rect x="21.800" y="297.600" width="8.400" height="8.400" fill="#ececec" stroke="#2b2b2b" stroke-width="1.300"/><path d="M26 289.800l2.800 3.600h-5.600zM26 313.800l2.800 -3.600h-5.600zM14 301.800l3.600 -2.800v5.600zM38 301.800l-3.600 -2.800v5.600z" fill="#e6e6e6" stroke="#2b2b2b" stroke-width="1"/>
<path d="M15.500 350.200c3.500 1.800 6.500 0.500 9.500 -2.200s7 -4 13.500 1.200" fill="none" stroke="#8fdcaf" stroke-width="1.300"/><path d="M14.200 348.200l1.400 -4.200l12.500 -11.200a1.200 1.200 0 0 1 1.700 0.100l1.400 1.600a1.200 1.200 0 0 1 -0.100 1.700l-12.700 10.900z" fill="#e6e6e6"/><path d="M26.500 334.500l3 3.400" stroke="#2b2b2b" stroke-width="0.800"/>
<path d="M22.600 385.600v-11.400a11.400 11.400 0 0 1 11.400 11.400z" fill="#8fdcaf"/><path d="M22.600 372a13.600 13.600 0 0 1 13.600 13.600" fill="none" stroke="#8fdcaf" stroke-width="0.900"/><path d="M16.800 365.500h5.800v20h15.200v3.500h-21z" fill="#e6e6e6"/><path d="M19.500 368.500h3M19.500 371.500h3M19.500 374.500h3M19.500 377.500h3M19.500 380.500h3M19.500 383.500h3M25 386.500v2.500M28 386.500v2.500M31 386.500v2.500M34 386.500v2.500" stroke="#2b2b2b" stroke-width="0.900"/>
<g fill="none" stroke="#8fdcaf" stroke-width="1.100" stroke-linejoin="round"><path d="M18.400 414.200h13.400v13.400h-13.400zM18.400 414.200l5.900 -5h13.400l-5.900 5M37.700 409.200v13.400l-5.900 5"/></g><path d="M16.800 404.800v7M13.300 408.300h7" stroke="#8fdcaf" stroke-width="1.900"/>
<path d="M1533 146.700L1533 123" stroke="#2890ff" stroke-width="2.200"/><path d="M1533 146.700L1511 150.500" stroke="#8bdc00" stroke-width="2.200"/><path d="M1533 146.700L1523 141" stroke="#c8364d" stroke-width="2.200"/>
<circle cx="1561.500" cy="142.400" r="7.100" fill="#4c6329" stroke="#79b51a" stroke-width="1.100"/>
<circle cx="1547.400" cy="155.700" r="7.900" fill="#7a3a45" stroke="#ff3352" stroke-width="1.100"/>
<circle cx="1533" cy="177.300" r="7.300" fill="#3a4f6e" stroke="#2f83e8" stroke-width="1.100"/>
<circle cx="1518.700" cy="138.100" r="7.500" fill="#a8394c"/>
<circle cx="1504.200" cy="151.400" r="8.400" fill="#7fcc10"/>
<circle cx="1533" cy="116.700" r="8.200" fill="#2b8bf0"/>
<g font-family="Liberation Sans, sans-serif" font-size="11" text-anchor="middle"><text x="1533" y="120.700" fill="#0c1a2c">Z</text><text x="1518.700" y="141.800" fill="#2a0c12" font-size="10.500">X</text><text x="1504.200" y="155.400" fill="#182a04">Y</text></g>
<path d="M1581 115.500l-3 3.300l3 3.300" fill="none" stroke="#b0b0b0" stroke-width="1.100"/>
<circle cx="1561" cy="201.7" r="13.600" fill="#353535"/>
<circle cx="1561" cy="231.8" r="13.600" fill="#353535"/>
<circle cx="1561" cy="261.8" r="13.600" fill="#353535"/>
<circle cx="1561" cy="291.7" r="13.600" fill="#353535"/>
<circle cx="1562.500" cy="200.200" r="5.300" fill="#e6e6e6"/><path d="M1558.800 204l-5.300 4.500" stroke="#e6e6e6" stroke-width="2.200" stroke-linecap="round"/><path d="M1560 200.200h5M1562.500 197.700v5" stroke="#353535" stroke-width="1.100"/>
<g fill="#e6e6e6"><path d="M1556.200 232.500q-1.600 -2.400 -0.600 -3.100q1 -0.700 2.400 1.200l1.200 1.600l-0.700 -7.600q0 -1.200 0.900 -1.200q0.900 0 1.100 1.200l0.700 5l-0.100 -6.600q0 -1.300 1 -1.300q1 0 1 1.300l0.200 6.500l0.700 -5.500q0.200 -1.200 1.100 -1.100q0.900 0.100 0.800 1.400l-0.500 6l1.300 -3.600q0.500 -1.100 1.300 -0.800q0.800 0.300 0.500 1.500l-1.400 5.500q-0.500 5.600 -4.900 5.600q-3.600 0 -5.300 -3.500z"/></g>
<g fill="none" stroke="#e6e6e6" stroke-width="1.200"><circle cx="1557.200" cy="259" r="3"/><circle cx="1563.800" cy="257.500" r="3.800"/><path d="M1554.500 262h9"/><rect x="1557" y="264" width="6.500" height="5.500"/><path d="M1568.500 264.500v4.500l-3.200 -2.200z"/><path d="M1554 265h3"/></g>
<g fill="none" stroke="#e6e6e6" stroke-width="1.200"><path d="M1556.500 284.500h9.500l3.500 14h-16.500zM1555.200 289.200h12M1554 293.800h14.500M1559.500 284.500l-1.200 14M1563 284.500l1.200 14"/></g>
<rect x="1599.500" y="51.500" width="5" height="3" fill="#e6e6e6"/><rect x="1606.500" y="56.500" width="7" height="3.500" fill="#e6e6e6"/><rect x="1606.500" y="61.500" width="7" height="3.500" fill="#e6e6e6"/><path d="M1601.500 55v8.500h4.500M1601.500 58.500h4.500" fill="none" stroke="#c8c8c8" stroke-width="1"/>
<polyline points="1616.5,57.5 1619.5,60.5 1622.5,57.5" fill="none" stroke="#d0d0d0" stroke-width="1.3" stroke-linecap="round" stroke-linejoin="round"/>
<g fill="none" stroke="#e0e0e0" stroke-width="1.1"><rect x="1642.0" y="51.5" width="9.5" height="9.5" rx="1" /><path d="M1639.8 54.0v9.3h9.3M1637.7 56.2v9.3h9.3"/></g>
<path d="M1642.8 60.0 l2.6 -4.6 l2.2 3 l1.2 -1.4 l1.7 3z" fill="#e0e0e0"/><circle cx="1649.4" cy="53.7" r="0.9" fill="#e0e0e0"/>
<polyline points="1653.5,57.5 1656.5,60.5 1659.5,57.5" fill="none" stroke="#d0d0d0" stroke-width="1.3" stroke-linecap="round" stroke-linejoin="round"/>
<circle cx="1693.5" cy="57.0" r="4.300" fill="none" stroke="#d0d0d0" stroke-width="1.200"/><path d="M1690.5 60.2l-4.800 5" stroke="#d0d0d0" stroke-width="1.300"/>
<path d="M1858.500 53h11l-4.200 5.500v5.800l-2.600 -1.800v-4z" fill="none" stroke="#e6e6e6" stroke-width="1.200" stroke-linejoin="round"/>
<polyline points="1874.5,57.5 1877.5,60.5 1880.5,57.5" fill="none" stroke="#d0d0d0" stroke-width="1.3" stroke-linecap="round" stroke-linejoin="round"/>
<g fill="none" stroke="#d8d8d8" stroke-width="1.100"><path d="M1894.500 55.500h8M1895.500 58.500h8v6.500h-8zM1898.500 61h2.500"/><path d="M1894.500 55.500v3h10v-2"/></g><circle cx="1904.700" cy="53.200" r="3" fill="#e6e6e6"/><path d="M1902.900 53.200h3.600M1904.700 51.400v3.600" stroke="#545454" stroke-width="0.900"/>
<path d="M1615.500 71v257" stroke="#4d4d4d" stroke-width="1"/>
<polyline points="1634.4,83.3 1637.9,87.5 1634.4,91.7" fill="none" stroke="#a0a0a0" stroke-width="1.2" stroke-linecap="round" stroke-linejoin="round"/>
<path d="M1649.5 81.0h13l-6.500 13.500zM1653.6 83.8h4.800l-2.400 5z" fill="#94673f" fill-rule="evenodd"/>
<g fill="none" stroke="#1b8f76" stroke-width="1"><path d="M1748.8 82.0h8.500M1758.0 83.2l-4.300 9.200M1748.0 83.2l4.300 9.200"/><rect x="1746.0" y="80.5" width="3" height="3" fill="#282828"/><rect x="1757.0" y="80.5" width="3" height="3" fill="#282828"/><rect x="1751.5" y="91.7" width="3" height="3" fill="#282828"/></g>
<path d="M1872.5 88.5q6 5.500 12 0" fill="none" stroke="#4a4a4a" stroke-width="1.100"/>
<path d="M1893.0 83.0h2.200l1 -1.700h5.600l1 1.700h2.200a1 1 0 0 1 1 1v7.200a1 1 0 0 1 -1 1h-12a1 1 0 0 1 -1 -1v-7.200a1 1 0 0 1 1 -1z" fill="#e0e0e0"/><circle cx="1899.0" cy="87.9" r="3.300" fill="none" stroke="#282828" stroke-width="1.100"/><circle cx="1899.0" cy="87.9" r="1.300" fill="#282828"/>
<polyline points="1634.4,103.3 1637.9,107.5 1634.4,111.7" fill="none" stroke="#a0a0a0" stroke-width="1.2" stroke-linecap="round" stroke-linejoin="round"/>
<path d="M1649.5 101.0h13l-6.500 13.500zM1653.6 103.8h4.800l-2.400 5z" fill="#94673f" fill-rule="evenodd"/>
<g fill="none" stroke="#1b8f76" stroke-width="1"><path d="M1748.8 102.0h8.500M1758.0 103.2l-4.300 9.200M1748.0 103.2l4.300 9.200"/><rect x="1746.0" y="100.5" width="3" height="3" fill="#282828"/><rect x="1757.0" y="100.5" width="3" height="3" fill="#282828"/><rect x="1751.5" y="111.7" width="3" height="3" fill="#282828"/></g>
<path d="M1872.5 108.5q6 5.500 12 0" fill="none" stroke="#4a4a4a" stroke-width="1.100"/>
<path d="M1893.0 103.0h2.200l1 -1.700h5.600l1 1.700h2.200a1 1 0 0 1 1 1v7.200a1 1 0 0 1 -1 1h-12a1 1 0 0 1 -1 -1v-7.200a1 1 0 0 1 1 -1z" fill="#e0e0e0"/><circle cx="1899.0" cy="107.9" r="3.300" fill="none" stroke="#282828" stroke-width="1.100"/><circle cx="1899.0" cy="107.9" r="1.300" fill="#282828"/>
<polyline points="1634.4,123.3 1637.9,127.5 1634.4,131.7" fill="none" stroke="#a0a0a0" stroke-width="1.2" stroke-linecap="round" stroke-linejoin="round"/>
<path d="M1649.5 121.0h13l-6.500 13.500zM1653.6 123.8h4.800l-2.400 5z" fill="#94673f" fill-rule="evenodd"/>
<g fill="none" stroke="#1b8f76" stroke-width="1"><path d="M1748.8 122.0h8.500M1758.0 123.2l-4.300 9.200M1748.0 123.2l4.300 9.200"/><rect x="1746.0" y="120.5" width="3" height="3" fill="#282828"/><rect x="1757.0" y="120.5" width="3" height="3" fill="#282828"/><rect x="1751.5" y="131.7" width="3" height="3" fill="#282828"/></g>
<path d="M1872.5 128.5q6 5.500 12 0" fill="none" stroke="#4a4a4a" stroke-width="1.100"/>
<path d="M1893.0 123.0h2.200l1 -1.700h5.600l1 1.700h2.200a1 1 0 0 1 1 1v7.200a1 1 0 0 1 -1 1h-12a1 1 0 0 1 -1 -1v-7.200a1 1 0 0 1 1 -1z" fill="#e0e0e0"/><circle cx="1899.0" cy="127.9" r="3.300" fill="none" stroke="#282828" stroke-width="1.100"/><circle cx="1899.0" cy="127.9" r="1.300" fill="#282828"/>
<polyline points="1634.4,143.3 1637.9,147.5 1634.4,151.7" fill="none" stroke="#a0a0a0" stroke-width="1.2" stroke-linecap="round" stroke-linejoin="round"/>
<path d="M1649.5 141.0h13l-6.500 13.500zM1653.6 143.8h4.800l-2.400 5z" fill="#94673f" fill-rule="evenodd"/>
<g fill="none" stroke="#1b8f76" stroke-width="1"><path d="M1748.8 142.0h8.500M1758.0 143.2l-4.300 9.200M1748.0 143.2l4.300 9.200"/><rect x="1746.0" y="140.5" width="3" height="3" fill="#282828"/><rect x="1757.0" y="140.5" width="3" height="3" fill="#282828"/><rect x="1751.5" y="151.7" width="3" height="3" fill="#282828"/></g>
<path d="M1872.5 148.5q6 5.500 12 0" fill="none" stroke="#4a4a4a" stroke-width="1.100"/>
<path d="M1893.0 143.0h2.200l1 -1.700h5.600l1 1.700h2.200a1 1 0 0 1 1 1v7.200a1 1 0 0 1 -1 1h-12a1 1 0 0 1 -1 -1v-7.200a1 1 0 0 1 1 -1z" fill="#e0e0e0"/><circle cx="1899.0" cy="147.9" r="3.300" fill="none" stroke="#282828" stroke-width="1.100"/><circle cx="1899.0" cy="147.9" r="1.300" fill="#282828"/>
<polyline points="1634.4,163.3 1637.9,167.5 1634.4,171.7" fill="none" stroke="#a0a0a0" stroke-width="1.2" stroke-linecap="round" stroke-linejoin="round"/>
<path d="M1649.5 161.0h13l-6.500 13.500zM1653.6 163.8h4.800l-2.400 5z" fill="#94673f" fill-rule="evenodd"/>
<g fill="none" stroke="#1b8f76" stroke-width="1"><path d="M1748.8 162.0h8.500M1758.0 163.2l-4.300 9.200M1748.0 163.2l4.300 9.200"/><rect x="1746.0" y="160.5" width="3" height="3" fill="#282828"/><rect x="1757.0" y="160.5" width="3" height="3" fill="#282828"/><rect x="1751.5" y="171.7" width="3" height="3" fill="#282828"/></g>
<path d="M1872.5 168.5q6 5.500 12 0" fill="none" stroke="#4a4a4a" stroke-width="1.100"/>
<path d="M1893.0 163.0h2.200l1 -1.700h5.600l1 1.700h2.200a1 1 0 0 1 1 1v7.200a1 1 0 0 1 -1 1h-12a1 1 0 0 1 -1 -1v-7.200a1 1 0 0 1 1 -1z" fill="#e0e0e0"/><circle cx="1899.0" cy="167.9" r="3.300" fill="none" stroke="#282828" stroke-width="1.100"/><circle cx="1899.0" cy="167.9" r="1.300" fill="#282828"/>
<polyline points="1634.4,183.3 1637.9,187.5 1634.4,191.7" fill="none" stroke="#a0a0a0" stroke-width="1.2" stroke-linecap="round" stroke-linejoin="round"/>
<path d="M1649.5 181.0h13l-6.500 13.500zM1653.6 183.8h4.800l-2.400 5z" fill="#94673f" fill-rule="evenodd"/>
<g fill="none" stroke="#1b8f76" stroke-width="1"><path d="M1748.8 182.0h8.500M1758.0 183.2l-4.300 9.200M1748.0 183.2l4.300 9.200"/><rect x="1746.0" y="180.5" width="3" height="3" fill="#282828"/><rect x="1757.0" y="180.5" width="3" height="3" fill="#282828"/><rect x="1751.5" y="191.7" width="3" height="3" fill="#282828"/></g>
<path d="M1872.5 188.5q6 5.500 12 0" fill="none" stroke="#4a4a4a" stroke-width="1.100"/>
<path d="M1893.0 183.0h2.200l1 -1.700h5.600l1 1.700h2.200a1 1 0 0 1 1 1v7.200a1 1 0 0 1 -1 1h-12a1 1 0 0 1 -1 -1v-7.200a1 1 0 0 1 1 -1z" fill="#e0e0e0"/><circle cx="1899.0" cy="187.9" r="3.300" fill="none" stroke="#282828" stroke-width="1.100"/><circle cx="1899.0" cy="187.9" r="1.300" fill="#282828"/>
<polyline points="1634.4,203.3 1637.9,207.5 1634.4,211.7" fill="none" stroke="#a0a0a0" stroke-width="1.2" stroke-linecap="round" stroke-linejoin="round"/>
<path d="M1649.5 201.0h13l-6.500 13.500zM1653.6 203.8h4.800l-2.400 5z" fill="#94673f" fill-rule="evenodd"/>
<g fill="none" stroke="#1b8f76" stroke-width="1"><path d="M1748.8 202.0h8.500M1758.0 203.2l-4.300 9.200M1748.0 203.2l4.300 9.200"/><rect x="1746.0" y="200.5" width="3" height="3" fill="#282828"/><rect x="1757.0" y="200.5" width="3" height="3" fill="#282828"/><rect x="1751.5" y="211.7" width="3" height="3" fill="#282828"/></g>
<path d="M1872.5 208.5q6 5.500 12 0" fill="none" stroke="#4a4a4a" stroke-width="1.100"/>
<path d="M1893.0 203.0h2.200l1 -1.700h5.600l1 1.700h2.200a1 1 0 0 1 1 1v7.200a1 1 0 0 1 -1 1h-12a1 1 0 0 1 -1 -1v-7.200a1 1 0 0 1 1 -1z" fill="#e0e0e0"/><circle cx="1899.0" cy="207.9" r="3.300" fill="none" stroke="#282828" stroke-width="1.100"/><circle cx="1899.0" cy="207.9" r="1.300" fill="#282828"/>
<polyline points="1634.4,223.3 1637.9,227.5 1634.4,231.7" fill="none" stroke="#a0a0a0" stroke-width="1.2" stroke-linecap="round" stroke-linejoin="round"/>
<path d="M1649.5 221.0h13l-6.500 13.500zM1653.6 223.8h4.800l-2.400 5z" fill="#94673f" fill-rule="evenodd"/>
<g fill="none" stroke="#1b8f76" stroke-width="1"><path d="M1748.8 222.0h8.500M1758.0 223.2l-4.300 9.200M1748.0 223.2l4.300 9.200"/><rect x="1746.0" y="220.5" width="3" height="3" fill="#282828"/><rect x="1757.0" y="220.5" width="3" height="3" fill="#282828"/><rect x="1751.5" y="231.7" width="3" height="3" fill="#282828"/></g>
<path d="M1872.5 228.5q6 5.500 12 0" fill="none" stroke="#4a4a4a" stroke-width="1.100"/>
<path d="M1893.0 223.0h2.200l1 -1.700h5.600l1 1.700h2.200a1 1 0 0 1 1 1v7.200a1 1 0 0 1 -1 1h-12a1 1 0 0 1 -1 -1v-7.200a1 1 0 0 1 1 -1z" fill="#e0e0e0"/><circle cx="1899.0" cy="227.9" r="3.300" fill="none" stroke="#282828" stroke-width="1.100"/><circle cx="1899.0" cy="227.9" r="1.300" fill="#282828"/>
<polyline points="1634.4,243.3 1637.9,247.5 1634.4,251.7" fill="none" stroke="#a0a0a0" stroke-width="1.2" stroke-linecap="round" stroke-linejoin="round"/>
<path d="M1649.5 241.0h13l-6.500 13.500zM1653.6 243.8h4.800l-2.400 5z" fill="#94673f" fill-rule="evenodd"/>
<g fill="none" stroke="#1b8f76" stroke-width="1"><path d="M1748.8 242.0h8.500M1758.0 243.2l-4.300 9.200M1748.0 243.2l4.300 9.200"/><rect x="1746.0" y="240.5" width="3" height="3" fill="#282828"/><rect x="1757.0" y="240.5" width="3" height="3" fill="#282828"/><rect x="1751.5" y="251.7" width="3" height="3" fill="#282828"/></g>
<path d="M1872.5 248.5q6 5.500 12 0" fill="none" stroke="#4a4a4a" stroke-width="1.100"/>
<path d="M1893.0 243.0h2.200l1 -1.700h5.600l1 1.700h2.200a1 1 0 0 1 1 1v7.200a1 1 0 0 1 -1 1h-12a1 1 0 0 1 -1 -1v-7.200a1 1 0 0 1 1 -1z" fill="#e0e0e0"/><circle cx="1899.0" cy="247.9" r="3.300" fill="none" stroke="#282828" stroke-width="1.100"/><circle cx="1899.0" cy="247.9" r="1.300" fill="#282828"/>
<polyline points="1634.4,263.3 1637.9,267.5 1634.4,271.7" fill="none" stroke="#a0a0a0" stroke-width="1.2" stroke-linecap="round" stroke-linejoin="round"/>
<path d="M1649.5 261.0h13l-6.500 13.500zM1653.6 263.8h4.800l-2.400 5z" fill="#94673f" fill-rule="evenodd"/>
<g fill="none" stroke="#1b8f76" stroke-width="1"><path d="M1748.8 262.0h8.500M1758.0 263.2l-4.300 9.200M1748.0 263.2l4.300 9.200"/><rect x="1746.0" y="260.5" width="3" height="3" fill="#282828"/><rect x="1757.0" y="260.5" width="3" height="3" fill="#282828"/><rect x="1751.5" y="271.7" width="3" height="3" fill="#282828"/></g>
<path d="M1872.5 268.5q6 5.500 12 0" fill="none" stroke="#4a4a4a" stroke-width="1.100"/>
<path d="M1893.0 263.0h2.200l1 -1.700h5.600l1 1.700h2.200a1 1 0 0 1 1 1v7.200a1 1 0 0 1 -1 1h-12a1 1 0 0 1 -1 -1v-7.200a1 1 0 0 1 1 -1z" fill="#e0e0e0"/><circle cx="1899.0" cy="267.9" r="3.300" fill="none" stroke="#282828" stroke-width="1.100"/><circle cx="1899.0" cy="267.9" r="1.300" fill="#282828"/>
<polyline points="1634.4,283.3 1637.9,287.5 1634.4,291.7" fill="none" stroke="#a0a0a0" stroke-width="1.2" stroke-linecap="round" stroke-linejoin="round"/>
<path d="M1649.5 281.0h13l-6.500 13.500zM1653.6 283.8h4.800l-2.400 5z" fill="#94673f" fill-rule="evenodd"/>
<g fill="none" stroke="#1b8f76" stroke-width="1"><path d="M1748.8 282.0h8.500M1758.0 283.2l-4.300 9.200M1748.0 283.2l4.300 9.200"/><rect x="1746.0" y="280.5" width="3" height="3" fill="#282828"/><rect x="1757.0" y="280.5" width="3" height="3" fill="#282828"/><rect x="1751.5" y="291.7" width="3" height="3" fill="#282828"/></g>
<path d="M1872.5 288.5q6 5.500 12 0" fill="none" stroke="#4a4a4a" stroke-width="1.100"/>
<path d="M1893.0 283.0h2.200l1 -1.700h5.600l1 1.700h2.200a1 1 0 0 1 1 1v7.200a1 1 0 0 1 -1 1h-12a1 1 0 0 1 -1 -1v-7.200a1 1 0 0 1 1 -1z" fill="#e0e0e0"/><circle cx="1899.0" cy="287.9" r="3.300" fill="none" stroke="#282828" stroke-width="1.100"/><circle cx="1899.0" cy="287.9" r="1.300" fill="#282828"/>
<polyline points="1634.4,303.3 1637.9,307.5 1634.4,311.7" fill="none" stroke="#a0a0a0" stroke-width="1.2" stroke-linecap="round" stroke-linejoin="round"/>
<path d="M1649.5 301.0h13l-6.500 13.500zM1653.6 303.8h4.800l-2.400 5z" fill="#94673f" fill-rule="evenodd"/>
<g fill="none" stroke="#1b8f76" stroke-width="1"><path d="M1748.8 302.0h8.500M1758.0 303.2l-4.300 9.200M1748.0 303.2l4.300 9.200"/><rect x="1746.0" y="300.5" width="3" height="3" fill="#282828"/><rect x="1757.0" y="300.5" width="3" height="3" fill="#282828"/><rect x="1751.5" y="311.7" width="3" height="3" fill="#282828"/></g>
<path d="M1872.5 308.5q6 5.500 12 0" fill="none" stroke="#4a4a4a" stroke-width="1.100"/>
<path d="M1893.0 303.0h2.200l1 -1.700h5.600l1 1.700h2.200a1 1 0 0 1 1 1v7.200a1 1 0 0 1 -1 1h-12a1 1 0 0 1 -1 -1v-7.200a1 1 0 0 1 1 -1z" fill="#e0e0e0"/><circle cx="1899.0" cy="307.9" r="3.300" fill="none" stroke="#282828" stroke-width="1.100"/><circle cx="1899.0" cy="307.9" r="1.300" fill="#282828"/>
<polyline points="1634.4,323.3 1637.9,327.5 1634.4,331.7" fill="none" stroke="#a0a0a0" stroke-width="1.2" stroke-linecap="round" stroke-linejoin="round"/>
<path d="M1649.5 321.0h13l-6.500 13.500zM1653.6 323.8h4.800l-2.400 5z" fill="#94673f" fill-rule="evenodd"/>
<g fill="none" stroke="#1b8f76" stroke-width="1"><path d="M1748.8 322.0h8.500M1758.0 323.2l-4.300 9.200M1748.0 323.2l4.300 9.200"/><rect x="1746.0" y="320.5" width="3" height="3" fill="#282828"/><rect x="1757.0" y="320.5" width="3" height="3" fill="#282828"/><rect x="1751.5" y="331.7" width="3" height="3" fill="#282828"/></g>
<path d="M1872.5 328.5q6 5.500 12 0" fill="none" stroke="#4a4a4a" stroke-width="1.100"/>
<path d="M1893.0 323.0h2.200l1 -1.700h5.600l1 1.700h2.200a1 1 0 0 1 1 1v7.200a1 1 0 0 1 -1 1h-12a1 1 0 0 1 -1 -1v-7.200a1 1 0 0 1 1 -1z" fill="#e0e0e0"/><circle cx="1899.0" cy="327.9" r="3.300" fill="none" stroke="#282828" stroke-width="1.100"/><circle cx="1899.0" cy="327.9" r="1.300" fill="#282828"/>
<path d="M1654.300 70.800h3.400l-1.700 3.200z" fill="#94673f"/><path d="M1751.500 70.800v2.600h3v-2.600" fill="none" stroke="#1b8f76"/><path d="M1892.500 71.600h13" stroke="#e0e0e0" stroke-width="1.500"/>
<polyline points="1612.3,345.4 1616.5,349.6 1620.7,345.4" fill="none" stroke="#c8c8c8" stroke-width="1.3" stroke-linecap="round" stroke-linejoin="round"/>
<rect x="1630.0" y="341.6" width="12" height="3.200" fill="#e6e6e6"/><rect x="1630.8" y="345.8" width="10.400" height="6.800" fill="#e6e6e6"/><rect x="1634.3" y="347.3" width="3.400" height="1.500" fill="#4a4a4a"/>
<rect x="1853" y="342.500" width="10.500" height="10.500" rx="1.500" fill="#e6e6e6"/><path d="M1855.300 347.800l2.300 2.500l4 -5.300" fill="none" stroke="#282828" stroke-width="1.500"/>
<path d="M1872.0 347.2q6.500 -7.500 13 0q-6.500 7.500 -13 0z" fill="none" stroke="#e6e6e6" stroke-width="1.300"/><circle cx="1878.5" cy="347.2" r="2.300" fill="#e6e6e6"/>
<path d="M1893.0 343.0h2.200l1 -1.700h5.600l1 1.700h2.200a1 1 0 0 1 1 1v7.200a1 1 0 0 1 -1 1h-12a1 1 0 0 1 -1 -1v-7.200a1 1 0 0 1 1 -1z" fill="#e0e0e0"/><circle cx="1899.0" cy="347.9" r="3.300" fill="none" stroke="#282828" stroke-width="1.100"/><circle cx="1899.0" cy="347.9" r="1.300" fill="#282828"/>
<rect x="1912.500" y="325" width="3" height="36" rx="1.500" fill="#3c3c3c"/>
<clipPath id="olc"><rect x="1587" y="46" width="329" height="320.500"/></clipPath><g clip-path="url(#olc)">
<path d="M1615.500 362v10" stroke="#4d4d4d" stroke-width="1"/>
<polyline points="1634.4,363.3 1637.9,367.5 1634.4,371.7" fill="none" stroke="#c8c8c8" stroke-width="1.2" stroke-linecap="round" stroke-linejoin="round"/>
<path d="M1649.5 361.0h13l-6.500 13.500zM1653.6 363.8h4.800l-2.400 5z" fill="#e08a3c" fill-rule="evenodd"/>
<g fill="none" stroke="#18b494" stroke-width="1.1"><path d="M1723.8 362.0h8.500M1733.0 363.2l-4.300 9.200M1723.0 363.2l4.300 9.200"/><rect x="1721.0" y="360.5" width="3" height="3" fill="#282828"/><rect x="1732.0" y="360.5" width="3" height="3" fill="#282828"/><rect x="1726.5" y="371.7" width="3" height="3" fill="#282828"/></g>
<path d="M1872.0 367.2q6.500 -7.500 13 0q-6.500 7.500 -13 0z" fill="none" stroke="#e6e6e6" stroke-width="1.300"/><circle cx="1878.5" cy="367.2" r="2.300" fill="#e6e6e6"/>
<path d="M1893.0 363.0h2.200l1 -1.700h5.600l1 1.700h2.200a1 1 0 0 1 1 1v7.200a1 1 0 0 1 -1 1h-12a1 1 0 0 1 -1 -1v-7.200a1 1 0 0 1 1 -1z" fill="#e0e0e0"/><circle cx="1899.0" cy="367.9" r="3.300" fill="none" stroke="#282828" stroke-width="1.100"/><circle cx="1899.0" cy="367.9" r="1.300" fill="#282828"/>
</g>
<path d="M1587 433.5h27.500" stroke="#181818" stroke-width="1.600"/>
<path d="M1587 582.5h27.500" stroke="#181818" stroke-width="1.600"/>
<path d="M1587 617.5h27.500" stroke="#181818" stroke-width="1.600"/>
<path d="M1587 821.0h27.500" stroke="#181818" stroke-width="1.600"/>
<rect x="1599.200" y="376.300" width="13.400" height="6" rx="3" fill="#e6e6e6"/><rect x="1599.200" y="384" width="13.400" height="6" rx="3" fill="#e6e6e6"/><path d="M1605.500 377.400h4.100a1.900 1.900 0 0 1 0 3.800h-4.100zM1608.500 385.100h1.100a1.900 1.900 0 0 1 0 3.800h-1.100z" fill="#282828"/>
<polyline points="1616.5,382.5 1619.5,385.5 1622.5,382.5" fill="none" stroke="#d0d0d0" stroke-width="1.3" stroke-linecap="round" stroke-linejoin="round"/>
<circle cx="1706.0" cy="382.0" r="4.300" fill="none" stroke="#d0d0d0" stroke-width="1.200"/><path d="M1703.0 385.2l-4.800 5" stroke="#d0d0d0" stroke-width="1.300"/>
<polyline points="1896.5,382.5 1899.5,385.5 1902.5,382.5" fill="none" stroke="#d0d0d0" stroke-width="1.3" stroke-linecap="round" stroke-linejoin="round"/>
<g transform="translate(1632.0,414.2) scale(1)"><rect x="-3.7" y="-3.7" width="7.4" height="7.4" fill="#e6e6e6"/><path d="M-6.8 -4v-2.8h2.8M4 -6.8h2.8v2.8M6.8 4v2.8h-2.8M-4 6.8h-2.8v-2.8" fill="none" stroke="#e6e6e6" stroke-width="1.1"/></g>
<g transform="translate(1900.5,413.5) rotate(45)" fill="none" stroke="#a0a0a0" stroke-width="1.1" stroke-linejoin="round"><path d="M-2.2 -7h4.4l-0.6 1.2v3.6l2.2 2.4h-7.6l2.2 -2.4v-3.6z"/><path d="M0 0.2v6.2"/></g>
<path d="M1630 450h9M1634.500 445.500v9" stroke="#e6e6e6" stroke-width="1.100"/>
<g fill="#d0d0d0"><path d="M1594.700 411v7h1v-7zM1593.600 419.500h3.200v3.500a1.600 1.600 0 0 1 -3.200 0z"/><path d="M1603.500 412.500a3 3 0 0 0 1.500 5.200v6h1.800v-6a3 3 0 0 0 1.500 -5.200v3h-2.300v-3z"/></g>
<g fill="#d0d0d0"><path d="M1594.500 449h14v10.500h-14zM1597 447h3.500v2h-3.500z"/></g><rect x="1596.500" y="451.500" width="6.500" height="1.600" fill="#1d1d1d"/><rect x="1596.500" y="454.300" width="6.500" height="1.600" fill="#1d1d1d"/><rect x="1604.500" y="451.500" width="2.200" height="1.600" fill="#1d1d1d"/><rect x="1604.500" y="454.300" width="2.200" height="1.600" fill="#1d1d1d"/>
<path d="M1594.500 475.500h14v5h-2v-2h-10v2h-2z" fill="#d0d0d0"/><rect x="1597.500" y="480.500" width="8" height="7.500" fill="#d0d0d0"/><path d="M1599 487l2.500 -3.500l2.500 3.500z" fill="#1d1d1d"/>
<g fill="none" stroke="#d0d0d0" stroke-width="1.1"><rect x="1599.5" y="503.5" width="9.5" height="9.5" rx="1" /><path d="M1597.3 506.0v9.3h9.3M1595.2 508.2v9.3h9.3"/></g>
<path d="M1600.3 512.0 l2.6 -4.6 l2.2 3 l1.2 -1.4 l1.7 3z" fill="#d0d0d0"/><circle cx="1606.9" cy="505.7" r="0.9" fill="#d0d0d0"/>
<path d="M1594.300 545.500l3.400 -10.400q0.800 -1 1.700 0l1.500 4.800q-2.700 2 -1.900 5.600z" fill="#d0d0d0"/><circle cx="1606.300" cy="533.800" r="1.700" fill="#d0d0d0"/><circle cx="1604" cy="543" r="3.200" fill="none" stroke="#d0d0d0" stroke-width="1.100"/>
<circle cx="1601" cy="565.500" r="6" fill="none" stroke="#cc5d6a" stroke-width="1.200"/><path d="M1596.500 562q3 -2.500 4 0.500t4 1.500q1 3 -2 4t-3.500 3q-3 -2 -1.500 -5z" fill="#cc5d6a"/><path d="M1594.300 572l13.500 -13.500" stroke="#cc5d6a" stroke-width="0.900"/>
<rect x="1595.0" y="595.8" width="12" height="3.200" fill="#e0e0e0"/><rect x="1595.8" y="600.0" width="10.400" height="6.800" fill="#e0e0e0"/><rect x="1599.3" y="601.5" width="3.400" height="1.500" fill="#1d1d1d"/>
<rect x="1597" y="598.200" width="8" height="6" fill="#1d1d1d"/><rect x="1599.700" y="600" width="2.600" height="1.300" fill="#e0e0e0"/><rect x="1595.500" y="596.200" width="11" height="2.200" fill="#1d1d1d"/>
<g fill="none" stroke="#e0e0e0" stroke-width="1.100"><rect x="1594.600" y="595.500" width="12.800" height="3.400"/><rect x="1595.600" y="598.900" width="10.800" height="8"/></g>
<g transform="translate(1601.0,637.8) scale(1)"><rect x="-3.7" y="-3.7" width="7.4" height="7.4" fill="#e0904a"/><path d="M-6.8 -4v-2.8h2.8M4 -6.8h2.8v2.8M6.8 4v2.8h-2.8M-4 6.8h-2.8v-2.8" fill="none" stroke="#e0904a" stroke-width="1.1"/></g>
<path d="M1595 672.500l6.800 -6.800a3.800 3.800 0 0 1 4.300 -5l-2.200 2.200l0.600 2.200l2.200 0.600l2.200 -2.200a3.800 3.800 0 0 1 -5 4.300l-6.800 6.800a1.500 1.500 0 0 1 -2.100 -2.100z" fill="#6d9bf0" transform="translate(-1,-0.500)"/>
<g stroke="#5a8ae0" stroke-width="1.100" fill="#5a8ae0"><path d="M1596.400 689.400h11M1596.400 689.400v10M1596.400 689.400l10.300 9.600" fill="none"/><circle cx="1596.400" cy="689.400" r="2.300"/><circle cx="1607.500" cy="689.400" r="1.200"/><circle cx="1596.400" cy="699.500" r="1.200"/><circle cx="1607" cy="699.500" r="1.800"/></g>
<circle cx="1601" cy="722" r="2.800" fill="#5a8ae0"/><path d="M1606.300 726a6.500 6.500 0 1 1 -1.200 -9" fill="none" stroke="#5a8ae0" stroke-width="1.100"/><circle cx="1606.300" cy="717" r="1.500" fill="#5a8ae0"/>
<g fill="none" stroke="#5a8ae0" stroke-width="1.100"><path d="M1594.800 752.500a5.200 5.200 0 0 0 9.200 3.300l3.700 -7.500a2.500 2.500 0 0 0 -3 -3.400l-6.700 2.500a5.200 5.200 0 0 0 -3.200 5.100z"/><circle cx="1600" cy="751.800" r="2.600" stroke-width="1.700"/><circle cx="1605.400" cy="747" r="0.800"/></g>
<g fill="none" stroke="#18c49c" stroke-width="1.2"><path d="M1596.8 773.1h8.500M1606.0 774.3l-4.300 9.200M1596.0 774.3l4.300 9.200"/><rect x="1594.0" y="771.6" width="3" height="3" fill="#282828"/><rect x="1605.0" y="771.6" width="3" height="3" fill="#282828"/><rect x="1599.5" y="782.8" width="3" height="3" fill="#282828"/></g>
<circle cx="1601" cy="806" r="6.600" fill="#cc5d6a"/><path d="M1601 806v-6.600a6.600 6.600 0 0 1 6.600 6.600zM1601 806v6.600a6.600 6.600 0 0 1 -6.600 -6.600z" fill="#1d1d1d"/><circle cx="1601" cy="806" r="6.100" fill="none" stroke="#cc5d6a" stroke-width="1"/>
<rect x="8.5" y="1057.500" width="11" height="15" rx="4" fill="none" stroke="#b4b4b4" stroke-width="1.100"/>
<path d="M9.0 1057.500h4.500v6.500h-5v-2.500a4 4 0 0 1 0.500 -4z" fill="#b4b4b4"/>
<rect x="66.5" y="1057.500" width="11" height="15" rx="4" fill="none" stroke="#b4b4b4" stroke-width="1.100"/>
<rect x="70.3" y="1058.500" width="3.400" height="6" rx="1.500" fill="#b4b4b4"/>
<rect x="155.5" y="1057.500" width="11" height="15" rx="4" fill="none" stroke="#b4b4b4" stroke-width="1.100"/>
<path d="M166.0 1057.500h-4.500v6.500h5v-2.500a4 4 0 0 0 -0.500 -4z" fill="#b4b4b4"/>
</svg>
</div>
</body></html>
